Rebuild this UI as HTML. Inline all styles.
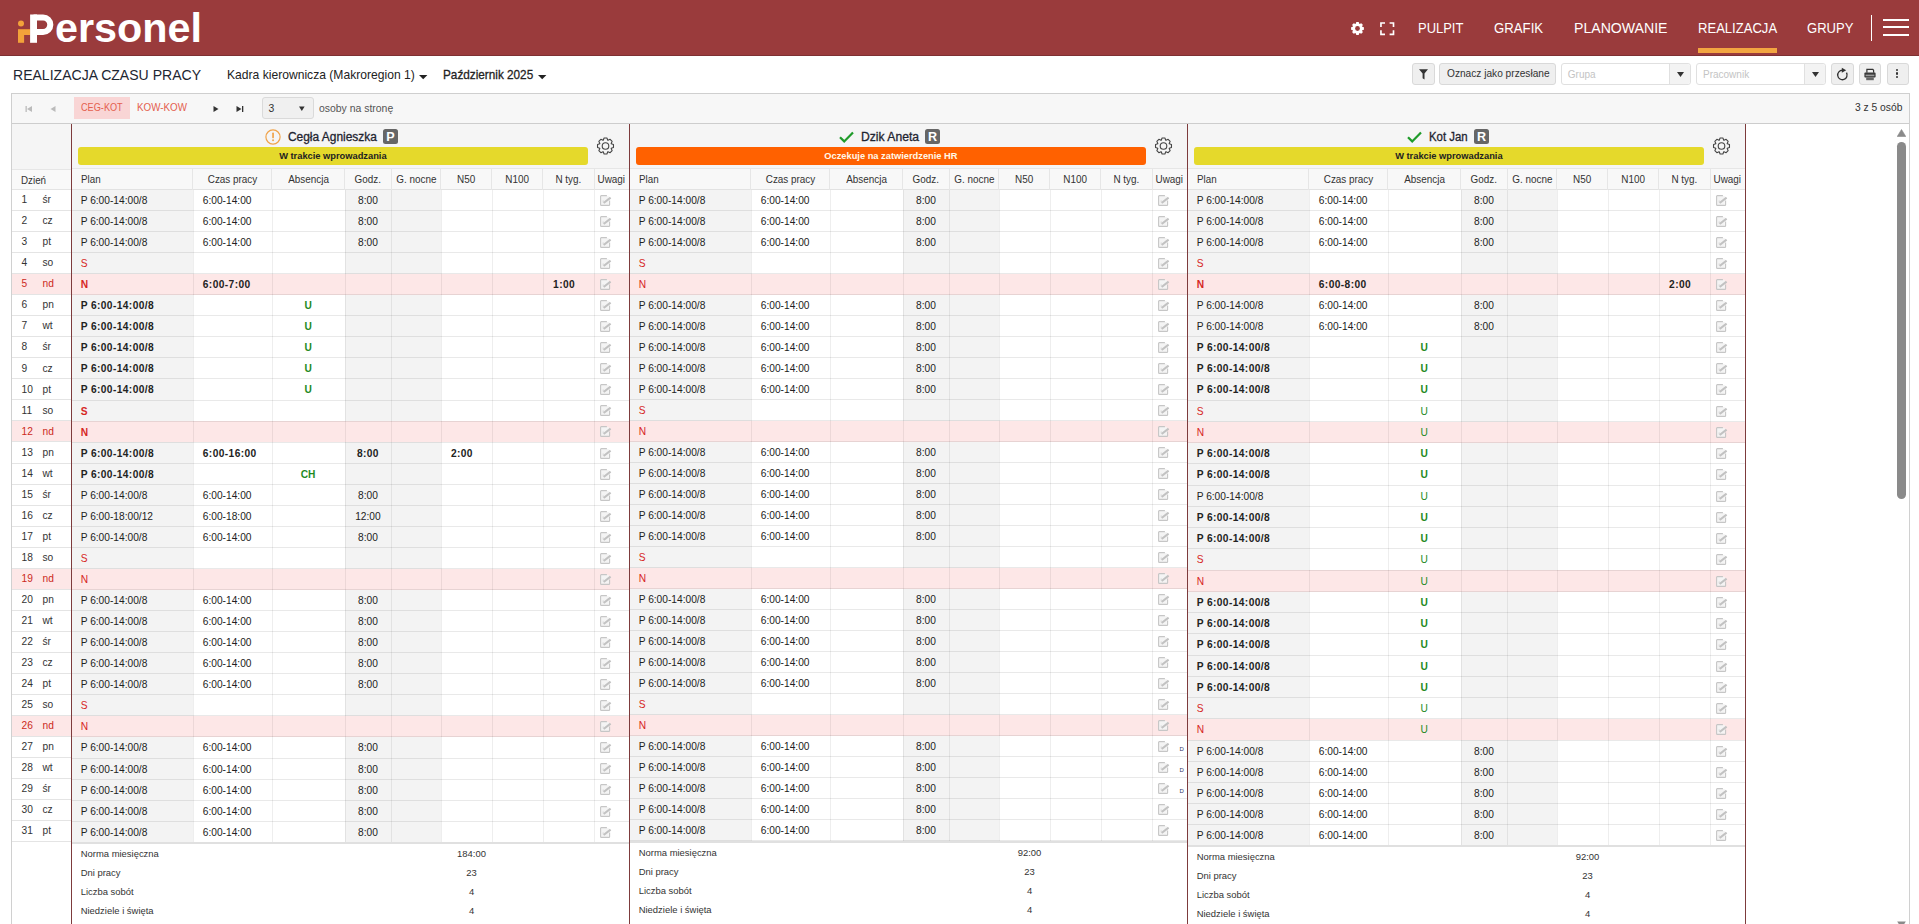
<!DOCTYPE html><html><head><meta charset="utf-8"><title>Realizacja</title><style>
*{box-sizing:border-box}
html,body{margin:0;padding:0}
body{width:1919px;height:924px;overflow:hidden;position:relative;background:#fff;font-family:"Liberation Sans",sans-serif;color:#222}
.ab{position:absolute}
.t{position:absolute;white-space:pre;line-height:1}
.nav{position:absolute;top:20.2px;font-size:15.2px;color:#fff;white-space:pre;line-height:1}
.btn{position:absolute;border:1px solid #d9d9d9;border-radius:3px;background:#efefef}
.cell{position:absolute;white-space:pre;overflow:hidden}
</style></head><body>
<div class="ab" style="left:0;top:0;width:1919px;height:56px;background:#9a3b3c;border-bottom:1px solid #7e3032"></div>
<svg class="ab" style="left:0;top:0" width="60" height="56" viewBox="0 0 60 56"><circle cx="21" cy="23.6" r="3" fill="#f3a23a"/><rect x="18" y="29.2" width="6.1" height="13.6" fill="#f3a23a"/><rect x="24" y="29.2" width="6.2" height="5.8" fill="#f3a23a"/><rect x="30.1" y="14.5" width="6.9" height="28.3" fill="#fff"/><path d="M33.5,17.55 H43.1 A7.2,7.2 0 0 1 43.1,31.95 H33.5" fill="none" stroke="#fff" stroke-width="6.1"/></svg>
<div class="t" style="left:55px;top:8.3px;font-size:40.6px;font-weight:700;color:#fff"><span style="display:inline-block;transform-origin:0 0;transform:scaleX(1.0184)">ersonel</span></div>
<svg class="ab" style="left:1349px;top:20px" width="17" height="17" viewBox="0 0 17 17"><path d="M13.16,6.68 L14.90,7.36 L14.90,9.64 L13.16,10.32 L13.08,10.50 L13.83,12.22 L12.22,13.83 L10.50,13.08 L10.32,13.16 L9.64,14.90 L7.36,14.90 L6.68,13.16 L6.50,13.08 L4.78,13.83 L3.17,12.22 L3.92,10.50 L3.84,10.32 L2.10,9.64 L2.10,7.36 L3.84,6.68 L3.92,6.50 L3.17,4.78 L4.78,3.17 L6.50,3.92 L6.68,3.84 L7.36,2.10 L9.64,2.10 L10.32,3.84 L10.50,3.92 L12.22,3.17 L13.83,4.78 L13.08,6.50 Z" fill="#fff"/><circle cx="8.5" cy="8.5" r="2.4" fill="#9a3b3c"/></svg>
<svg class="ab" style="left:1379.8px;top:21.7px" width="15" height="14" viewBox="0 0 15 14" fill="none" stroke="#fff" stroke-width="1.65"><path d="M0.95,5 V0.95 H5 M9.6,0.95 H13.5 V5 M13.5,8.3 V12.35 H9.6 M5,12.35 H0.95 V8.3"/></svg>
<div class="nav" style="left:1417.5px;width:49.4px"><span style="display:inline-block;transform-origin:0 0;transform:scaleX(0.8538)">PULPIT</span></div>
<div class="nav" style="left:1493.8px;width:53.1px"><span style="display:inline-block;transform-origin:0 0;transform:scaleX(0.8683)">GRAFIK</span></div>
<div class="nav" style="left:1573.5px;width:97.5px"><span style="display:inline-block;transform-origin:0 0;transform:scaleX(0.9283)">PLANOWANIE</span></div>
<div class="nav" style="left:1697.5px;width:83.1px"><span style="display:inline-block;transform-origin:0 0;transform:scaleX(0.8598)">REALIZACJA</span></div>
<div class="nav" style="left:1807.3px;width:50.4px"><span style="display:inline-block;transform-origin:0 0;transform:scaleX(0.8590)">GRUPY</span></div>
<div class="ab" style="left:1697.5px;top:48px;width:79.5px;height:5px;background:#f2a541"></div>
<div class="ab" style="left:1870.5px;top:15px;width:1.5px;height:26px;background:#fff"></div>
<div class="ab" style="left:1883px;top:18.8px;width:26px;height:2.2px;background:#fff"></div>
<div class="ab" style="left:1883px;top:26.3px;width:26px;height:2.2px;background:#fff"></div>
<div class="ab" style="left:1883px;top:33.8px;width:26px;height:2.2px;background:#fff"></div>
<div class="t" style="left:12.8px;top:66.6px;font-size:15.2px;color:#1d2631"><span style="display:inline-block;transform-origin:0 0;transform:scaleX(0.9243)">REALIZACJA CZASU PRACY</span></div>
<div class="t" style="left:226.5px;top:69px;font-size:12.2px;color:#222"><span style="display:inline-block;transform-origin:0 0;transform:scaleX(0.9937)">Kadra kierownicza (Makroregion 1)</span></div>
<svg class="ab" style="left:418.5px;top:74.5px" width="9" height="5" viewBox="0 0 9 5"><path d="M0,0 H8.4 L4.2,4.3 Z" fill="#222"/></svg>
<div class="t" style="left:443.3px;top:69.3px;font-size:12.9px;font-weight:400;-webkit-text-stroke:0.3px #222;color:#222"><span style="display:inline-block;transform-origin:0 0;transform:scaleX(0.9121)">Październik 2025</span></div>
<svg class="ab" style="left:538px;top:74.5px" width="9" height="5" viewBox="0 0 9 5"><path d="M0,0 H8.4 L4.2,4.3 Z" fill="#222"/></svg>
<div class="btn" style="left:1412px;top:62.5px;width:23px;height:22.5px"></div>
<svg class="ab" style="left:1419px;top:69px" width="10" height="11" viewBox="0 0 10 11"><path d="M0,0.3 H9 L5.5,4.6 V10.5 L3.6,9.3 V4.6 Z" fill="#333"/></svg>
<div class="btn" style="left:1439px;top:62.5px;width:117px;height:22.5px"></div>
<div class="t" style="left:1446.7px;top:68.5px;font-size:10.1px;color:#333"><span style="display:inline-block;transform-origin:0 0;transform:scaleX(1.0047)">Oznacz jako przesłane</span></div>
<div class="ab" style="left:1561px;top:62.8px;width:130px;height:22.4px;border:1px solid #e0e0e0;border-radius:3px;background:#fff"></div>
<div class="ab" style="left:1669px;top:63.8px;width:21px;height:20.4px;background:#f3f3f3;border-left:1px solid #e0e0e0;border-radius:0 3px 3px 0"></div>
<div class="t" style="left:1567.8px;top:69.8px;font-size:10px;color:#c4c4c4">Grupa</div>
<svg class="ab" style="left:1676.5px;top:71.5px" width="7" height="6" viewBox="0 0 7 6"><path d="M0,0 H7 L3.5,5 Z" fill="#333"/></svg>
<div class="ab" style="left:1696.2px;top:62.8px;width:129.8px;height:22.4px;border:1px solid #e0e0e0;border-radius:3px;background:#fff"></div>
<div class="ab" style="left:1804.4px;top:63.8px;width:20.59999999999991px;height:20.4px;background:#f3f3f3;border-left:1px solid #e0e0e0;border-radius:0 3px 3px 0"></div>
<div class="t" style="left:1703.0px;top:69.8px;font-size:10px;color:#c4c4c4">Pracownik</div>
<svg class="ab" style="left:1811.7px;top:71.5px" width="7" height="6" viewBox="0 0 7 6"><path d="M0,0 H7 L3.5,5 Z" fill="#333"/></svg>
<div class="btn" style="left:1831.4px;top:62.5px;width:22.3px;height:22.5px"></div>
<div class="btn" style="left:1858.5px;top:62.5px;width:22.3px;height:22.5px"></div>
<div class="btn" style="left:1886.6px;top:62.5px;width:22.3px;height:22.5px"></div>
<svg class="ab" style="left:1836px;top:66px" width="14" height="16" viewBox="0 0 14 16"><path d="M10.5,6.7 A4.7,4.7 0 1 1 6.5,4.3" fill="none" stroke="#333" stroke-width="1.35"/><path d="M5.8,1.8 L10.2,4.3 L5.8,6.8 Z" fill="#333"/></svg>
<svg class="ab" style="left:1863.5px;top:67.5px" width="12" height="13" viewBox="0 0 12 13"><path d="M2.9,4.8 V1.4 H8.8 L9.6,2.3 V4.8" fill="none" stroke="#333" stroke-width="1.2"/><rect x="0.4" y="4.6" width="11.2" height="5" rx="0.8" fill="#3a3a3a"/><rect x="1.6" y="6.6" width="8.8" height="1.6" fill="#999"/><rect x="2.2" y="9.4" width="7.6" height="2.8" fill="#666"/></svg>
<div class="ab" style="left:1895.8px;top:68.6px;width:2.4px;height:2.4px;border-radius:50%;background:#333"></div>
<div class="ab" style="left:1895.8px;top:72.4px;width:2.4px;height:2.4px;border-radius:50%;background:#333"></div>
<div class="ab" style="left:1895.8px;top:76.1px;width:2.4px;height:2.4px;border-radius:50%;background:#333"></div>
<div class="ab" style="left:11px;top:93px;width:1899px;height:31px;background:#f7f7f7;border:1px solid #cfcfcf;border-bottom:1.5px solid #cdcdcd"></div>
<svg class="ab" style="left:25px;top:105px" width="8" height="8" viewBox="0 0 8 8"><rect x="0.5" y="1" width="1.3" height="6" fill="#bbb"/><path d="M7,1 V7 L2,4 Z" fill="#bbb"/></svg>
<svg class="ab" style="left:50px;top:105px" width="6" height="8" viewBox="0 0 6 8"><path d="M5.5,1 V7 L0.5,4 Z" fill="#bbb"/></svg>
<div class="ab" style="left:74.3px;top:97.2px;width:55.4px;height:22.2px;background:#f9d5d5"></div>
<div class="t" style="left:81px;top:102.3px;font-size:11.2px;color:#e4604f"><span style="display:inline-block;transform-origin:0 0;transform:scaleX(0.8181)">CEG-KOT</span></div>
<div class="t" style="left:137.2px;top:102.3px;font-size:11.2px;color:#e4604f"><span style="display:inline-block;transform-origin:0 0;transform:scaleX(0.8757)">KOW-KOW</span></div>
<svg class="ab" style="left:213px;top:105px" width="6" height="8" viewBox="0 0 6 8"><path d="M0.5,1 V7 L5.5,4 Z" fill="#333"/></svg>
<svg class="ab" style="left:235.5px;top:105px" width="8" height="8" viewBox="0 0 8 8"><path d="M0.5,1 V7 L5.5,4 Z" fill="#333"/><rect x="6" y="1" width="1.3" height="6" fill="#333"/></svg>
<div class="ab" style="left:261.5px;top:97.3px;width:52px;height:22px;background:#f0f0f0;border:1px solid #dadada;border-radius:3px"></div>
<div class="t" style="left:268.5px;top:103.8px;font-size:10.4px;color:#333">3</div>
<svg class="ab" style="left:299.3px;top:105.5px" width="6" height="6" viewBox="0 0 6 6"><path d="M0,0.5 H5.6 L2.8,5 Z" fill="#333"/></svg>
<div class="t" style="left:319.2px;top:103.8px;font-size:10.4px;color:#555"><span style="display:inline-block;transform-origin:0 0;transform:scaleX(1.0036)">osoby na stronę</span></div>
<div class="t" style="left:1855.2px;top:103px;font-size:10.3px;color:#333"><span style="display:inline-block;transform-origin:0 0;transform:scaleX(0.9976)">3 z 5 osób</span></div>
<div class="ab" style="left:11px;top:123px;width:1px;height:801px;background:#d0d0d0"></div>
<div class="ab" style="left:1909px;top:123px;width:1px;height:801px;background:#d0d0d0"></div>
<div class="ab" style="left:12px;top:124px;width:59px;height:66px;background:#f5f5f5"></div>
<div class="ab" style="left:12px;top:168.5px;width:59px;height:21.5px;background:#f9f9f9;border-top:1px solid #e6e6e6"></div>
<div class="t" style="left:20.7px;top:174.6px;font-size:11px;color:#333"><span style="display:inline-block;transform:scaleX(0.89);transform-origin:0 0">Dzień</span></div>
<div class="ab" style="left:12px;top:189px;width:59px;height:1px;background:#e4e4e4"></div>
<div class="ab" style="left:12px;top:190.00px;width:59px;height:21.04px;background:#fff;border-bottom:1px solid #e4e4e4"></div>
<div class="t" style="left:21.5px;top:195.20px;font-size:10.2px;color:#333;font-weight:400">1</div>
<div class="t" style="left:42.5px;top:195.20px;font-size:10.2px;color:#333;font-weight:400">śr</div>
<div class="ab" style="left:12px;top:211.04px;width:59px;height:21.04px;background:#fff;border-bottom:1px solid #e4e4e4"></div>
<div class="t" style="left:21.5px;top:216.24px;font-size:10.2px;color:#333;font-weight:400">2</div>
<div class="t" style="left:42.5px;top:216.24px;font-size:10.2px;color:#333;font-weight:400">cz</div>
<div class="ab" style="left:12px;top:232.08px;width:59px;height:21.04px;background:#fff;border-bottom:1px solid #e4e4e4"></div>
<div class="t" style="left:21.5px;top:237.28px;font-size:10.2px;color:#333;font-weight:400">3</div>
<div class="t" style="left:42.5px;top:237.28px;font-size:10.2px;color:#333;font-weight:400">pt</div>
<div class="ab" style="left:12px;top:253.12px;width:59px;height:21.04px;background:#fff;border-bottom:1px solid #e4e4e4"></div>
<div class="t" style="left:21.5px;top:258.32px;font-size:10.2px;color:#333;font-weight:400">4</div>
<div class="t" style="left:42.5px;top:258.32px;font-size:10.2px;color:#333;font-weight:400">so</div>
<div class="ab" style="left:12px;top:274.16px;width:59px;height:21.04px;background:#fde7e7;border-bottom:1px solid #e4e4e4"></div>
<div class="t" style="left:21.5px;top:279.36px;font-size:10.2px;color:#cc2a22;font-weight:400">5</div>
<div class="t" style="left:42.5px;top:279.36px;font-size:10.2px;color:#cc2a22;font-weight:400">nd</div>
<div class="ab" style="left:12px;top:295.20px;width:59px;height:21.04px;background:#fff;border-bottom:1px solid #e4e4e4"></div>
<div class="t" style="left:21.5px;top:300.40px;font-size:10.2px;color:#333;font-weight:400">6</div>
<div class="t" style="left:42.5px;top:300.40px;font-size:10.2px;color:#333;font-weight:400">pn</div>
<div class="ab" style="left:12px;top:316.24px;width:59px;height:21.04px;background:#fff;border-bottom:1px solid #e4e4e4"></div>
<div class="t" style="left:21.5px;top:321.44px;font-size:10.2px;color:#333;font-weight:400">7</div>
<div class="t" style="left:42.5px;top:321.44px;font-size:10.2px;color:#333;font-weight:400">wt</div>
<div class="ab" style="left:12px;top:337.28px;width:59px;height:21.04px;background:#fff;border-bottom:1px solid #e4e4e4"></div>
<div class="t" style="left:21.5px;top:342.48px;font-size:10.2px;color:#333;font-weight:400">8</div>
<div class="t" style="left:42.5px;top:342.48px;font-size:10.2px;color:#333;font-weight:400">śr</div>
<div class="ab" style="left:12px;top:358.32px;width:59px;height:21.04px;background:#fff;border-bottom:1px solid #e4e4e4"></div>
<div class="t" style="left:21.5px;top:363.52px;font-size:10.2px;color:#333;font-weight:400">9</div>
<div class="t" style="left:42.5px;top:363.52px;font-size:10.2px;color:#333;font-weight:400">cz</div>
<div class="ab" style="left:12px;top:379.36px;width:59px;height:21.04px;background:#fff;border-bottom:1px solid #e4e4e4"></div>
<div class="t" style="left:21.5px;top:384.56px;font-size:10.2px;color:#333;font-weight:400">10</div>
<div class="t" style="left:42.5px;top:384.56px;font-size:10.2px;color:#333;font-weight:400">pt</div>
<div class="ab" style="left:12px;top:400.40px;width:59px;height:21.04px;background:#fff;border-bottom:1px solid #e4e4e4"></div>
<div class="t" style="left:21.5px;top:405.60px;font-size:10.2px;color:#333;font-weight:400">11</div>
<div class="t" style="left:42.5px;top:405.60px;font-size:10.2px;color:#333;font-weight:400">so</div>
<div class="ab" style="left:12px;top:421.44px;width:59px;height:21.04px;background:#fde7e7;border-bottom:1px solid #e4e4e4"></div>
<div class="t" style="left:21.5px;top:426.64px;font-size:10.2px;color:#cc2a22;font-weight:400">12</div>
<div class="t" style="left:42.5px;top:426.64px;font-size:10.2px;color:#cc2a22;font-weight:400">nd</div>
<div class="ab" style="left:12px;top:442.48px;width:59px;height:21.04px;background:#fff;border-bottom:1px solid #e4e4e4"></div>
<div class="t" style="left:21.5px;top:447.68px;font-size:10.2px;color:#333;font-weight:400">13</div>
<div class="t" style="left:42.5px;top:447.68px;font-size:10.2px;color:#333;font-weight:400">pn</div>
<div class="ab" style="left:12px;top:463.52px;width:59px;height:21.04px;background:#fff;border-bottom:1px solid #e4e4e4"></div>
<div class="t" style="left:21.5px;top:468.72px;font-size:10.2px;color:#333;font-weight:400">14</div>
<div class="t" style="left:42.5px;top:468.72px;font-size:10.2px;color:#333;font-weight:400">wt</div>
<div class="ab" style="left:12px;top:484.56px;width:59px;height:21.04px;background:#fff;border-bottom:1px solid #e4e4e4"></div>
<div class="t" style="left:21.5px;top:489.76px;font-size:10.2px;color:#333;font-weight:400">15</div>
<div class="t" style="left:42.5px;top:489.76px;font-size:10.2px;color:#333;font-weight:400">śr</div>
<div class="ab" style="left:12px;top:505.60px;width:59px;height:21.04px;background:#fff;border-bottom:1px solid #e4e4e4"></div>
<div class="t" style="left:21.5px;top:510.80px;font-size:10.2px;color:#333;font-weight:400">16</div>
<div class="t" style="left:42.5px;top:510.80px;font-size:10.2px;color:#333;font-weight:400">cz</div>
<div class="ab" style="left:12px;top:526.64px;width:59px;height:21.04px;background:#fff;border-bottom:1px solid #e4e4e4"></div>
<div class="t" style="left:21.5px;top:531.84px;font-size:10.2px;color:#333;font-weight:400">17</div>
<div class="t" style="left:42.5px;top:531.84px;font-size:10.2px;color:#333;font-weight:400">pt</div>
<div class="ab" style="left:12px;top:547.68px;width:59px;height:21.04px;background:#fff;border-bottom:1px solid #e4e4e4"></div>
<div class="t" style="left:21.5px;top:552.88px;font-size:10.2px;color:#333;font-weight:400">18</div>
<div class="t" style="left:42.5px;top:552.88px;font-size:10.2px;color:#333;font-weight:400">so</div>
<div class="ab" style="left:12px;top:568.72px;width:59px;height:21.04px;background:#fde7e7;border-bottom:1px solid #e4e4e4"></div>
<div class="t" style="left:21.5px;top:573.92px;font-size:10.2px;color:#cc2a22;font-weight:400">19</div>
<div class="t" style="left:42.5px;top:573.92px;font-size:10.2px;color:#cc2a22;font-weight:400">nd</div>
<div class="ab" style="left:12px;top:589.76px;width:59px;height:21.04px;background:#fff;border-bottom:1px solid #e4e4e4"></div>
<div class="t" style="left:21.5px;top:594.96px;font-size:10.2px;color:#333;font-weight:400">20</div>
<div class="t" style="left:42.5px;top:594.96px;font-size:10.2px;color:#333;font-weight:400">pn</div>
<div class="ab" style="left:12px;top:610.80px;width:59px;height:21.04px;background:#fff;border-bottom:1px solid #e4e4e4"></div>
<div class="t" style="left:21.5px;top:616.00px;font-size:10.2px;color:#333;font-weight:400">21</div>
<div class="t" style="left:42.5px;top:616.00px;font-size:10.2px;color:#333;font-weight:400">wt</div>
<div class="ab" style="left:12px;top:631.84px;width:59px;height:21.04px;background:#fff;border-bottom:1px solid #e4e4e4"></div>
<div class="t" style="left:21.5px;top:637.04px;font-size:10.2px;color:#333;font-weight:400">22</div>
<div class="t" style="left:42.5px;top:637.04px;font-size:10.2px;color:#333;font-weight:400">śr</div>
<div class="ab" style="left:12px;top:652.88px;width:59px;height:21.04px;background:#fff;border-bottom:1px solid #e4e4e4"></div>
<div class="t" style="left:21.5px;top:658.08px;font-size:10.2px;color:#333;font-weight:400">23</div>
<div class="t" style="left:42.5px;top:658.08px;font-size:10.2px;color:#333;font-weight:400">cz</div>
<div class="ab" style="left:12px;top:673.92px;width:59px;height:21.04px;background:#fff;border-bottom:1px solid #e4e4e4"></div>
<div class="t" style="left:21.5px;top:679.12px;font-size:10.2px;color:#333;font-weight:400">24</div>
<div class="t" style="left:42.5px;top:679.12px;font-size:10.2px;color:#333;font-weight:400">pt</div>
<div class="ab" style="left:12px;top:694.96px;width:59px;height:21.04px;background:#fff;border-bottom:1px solid #e4e4e4"></div>
<div class="t" style="left:21.5px;top:700.16px;font-size:10.2px;color:#333;font-weight:400">25</div>
<div class="t" style="left:42.5px;top:700.16px;font-size:10.2px;color:#333;font-weight:400">so</div>
<div class="ab" style="left:12px;top:716.00px;width:59px;height:21.04px;background:#fde7e7;border-bottom:1px solid #e4e4e4"></div>
<div class="t" style="left:21.5px;top:721.20px;font-size:10.2px;color:#cc2a22;font-weight:400">26</div>
<div class="t" style="left:42.5px;top:721.20px;font-size:10.2px;color:#cc2a22;font-weight:400">nd</div>
<div class="ab" style="left:12px;top:737.04px;width:59px;height:21.04px;background:#fff;border-bottom:1px solid #e4e4e4"></div>
<div class="t" style="left:21.5px;top:742.24px;font-size:10.2px;color:#333;font-weight:400">27</div>
<div class="t" style="left:42.5px;top:742.24px;font-size:10.2px;color:#333;font-weight:400">pn</div>
<div class="ab" style="left:12px;top:758.08px;width:59px;height:21.04px;background:#fff;border-bottom:1px solid #e4e4e4"></div>
<div class="t" style="left:21.5px;top:763.28px;font-size:10.2px;color:#333;font-weight:400">28</div>
<div class="t" style="left:42.5px;top:763.28px;font-size:10.2px;color:#333;font-weight:400">wt</div>
<div class="ab" style="left:12px;top:779.12px;width:59px;height:21.04px;background:#fff;border-bottom:1px solid #e4e4e4"></div>
<div class="t" style="left:21.5px;top:784.32px;font-size:10.2px;color:#333;font-weight:400">29</div>
<div class="t" style="left:42.5px;top:784.32px;font-size:10.2px;color:#333;font-weight:400">śr</div>
<div class="ab" style="left:12px;top:800.16px;width:59px;height:21.04px;background:#fff;border-bottom:1px solid #e4e4e4"></div>
<div class="t" style="left:21.5px;top:805.36px;font-size:10.2px;color:#333;font-weight:400">30</div>
<div class="t" style="left:42.5px;top:805.36px;font-size:10.2px;color:#333;font-weight:400">cz</div>
<div class="ab" style="left:12px;top:821.20px;width:59px;height:21.04px;background:#fff;border-bottom:1px solid #e4e4e4"></div>
<div class="t" style="left:21.5px;top:826.40px;font-size:10.2px;color:#333;font-weight:400">31</div>
<div class="t" style="left:42.5px;top:826.40px;font-size:10.2px;color:#333;font-weight:400">pt</div>
<div class="ab" style="left:71px;top:123.5px;width:1.1px;height:801px;background:#7d3b3c"></div>
<div class="ab" style="left:629px;top:123.5px;width:1.1px;height:801px;background:#7d3b3c"></div>
<div class="ab" style="left:1187px;top:123.5px;width:1.1px;height:801px;background:#7d3b3c"></div>
<div class="ab" style="left:1745px;top:123.5px;width:1.1px;height:801px;background:#7d3b3c"></div>
<div class="ab" style="left:72px;top:124px;width:557px;height:45px;background:#f5f5f5"></div>
<div class="ab" style="left:77.8px;top:147px;width:510.2px;height:18px;border-radius:3px;background:#e5d92b"></div>
<div class="t" style="left:77.8px;top:151.5px;width:510.2px;text-align:center;font-size:9.3px;font-weight:700;color:#222">W trakcie wprowadzania</div>
<svg class="ab" style="left:596px;top:137px" width="19" height="18" viewBox="0 0 19 18"><path d="M15.27,6.74 L17.47,7.58 L17.47,10.42 L15.27,11.26 L15.18,11.48 L16.15,13.63 L14.13,15.65 L11.98,14.68 L11.76,14.77 L10.92,16.97 L8.08,16.97 L7.24,14.77 L7.02,14.68 L4.87,15.65 L2.85,13.63 L3.82,11.48 L3.73,11.26 L1.53,10.42 L1.53,7.58 L3.73,6.74 L3.82,6.52 L2.85,4.37 L4.87,2.35 L7.02,3.32 L7.24,3.23 L8.08,1.03 L10.92,1.03 L11.76,3.23 L11.98,3.32 L14.13,2.35 L16.15,4.37 L15.18,6.52 Z" fill="none" stroke="#444" stroke-width="1.1" stroke-linejoin="round"/><circle cx="9.5" cy="9" r="3.3" fill="none" stroke="#444" stroke-width="1.1"/></svg>
<svg class="ab" style="left:265px;top:129px" width="16" height="16" viewBox="0 0 16 16"><circle cx="8" cy="8" r="7.1" fill="none" stroke="#f0a34a" stroke-width="1.2"/><rect x="7.2" y="3.6" width="1.7" height="5.6" rx="0.6" fill="#f0a34a"/><circle cx="8.05" cy="11.3" r="0.95" fill="#f0a34a"/></svg>
<div class="t" style="left:287.5px;top:130.7px;font-size:12.3px;font-weight:400;-webkit-text-stroke:0.3px #1e2430;color:#1e2430"><span style="display:inline-block;transform-origin:0 0;transform:scaleX(0.9693)">Cegła Agnieszka</span></div>
<div class="ab" style="left:383px;top:129.2px;width:15px;height:14.8px;border-radius:2.5px;background:#666"></div><div class="t" style="left:383px;top:130.6px;width:15px;text-align:center;font-size:12.6px;font-weight:700;color:#fff">P</div>
<div class="ab" style="left:72px;top:167.8px;width:557px;height:22.7px;background:#f8f8f8;border-top:1px solid #e6e6e6;border-bottom:1px solid #e2e2e2"></div>
<div class="t" style="left:80.70px;top:173.6px;font-size:11px;color:#333"><span style="display:inline-block;transform:scaleX(0.89);transform-origin:0 0">Plan</span></div>
<div class="ab" style="left:192.00px;top:169px;width:1px;height:21px;background:#e6e6e6"></div>
<div class="t" style="left:192.50px;top:173.6px;width:79.20px;text-align:center;font-size:11px;color:#333"><span style="display:inline-block;transform:scaleX(0.9);transform-origin:50% 0">Czas pracy</span></div>
<div class="ab" style="left:271.20px;top:169px;width:1px;height:21px;background:#e6e6e6"></div>
<div class="t" style="left:271.70px;top:173.6px;width:72.90px;text-align:center;font-size:11px;color:#333"><span style="display:inline-block;transform:scaleX(0.9);transform-origin:50% 0">Absencja</span></div>
<div class="ab" style="left:344.10px;top:169px;width:1px;height:21px;background:#e6e6e6"></div>
<div class="t" style="left:344.60px;top:173.6px;width:46.60px;text-align:center;font-size:11px;color:#333"><span style="display:inline-block;transform:scaleX(0.9);transform-origin:50% 0">Godz.</span></div>
<div class="ab" style="left:390.70px;top:169px;width:1px;height:21px;background:#e6e6e6"></div>
<div class="t" style="left:391.20px;top:173.6px;width:49.40px;text-align:center;font-size:11px;color:#333"><span style="display:inline-block;transform:scaleX(0.9);transform-origin:50% 0">G. nocne</span></div>
<div class="ab" style="left:440.10px;top:169px;width:1px;height:21px;background:#e6e6e6"></div>
<div class="t" style="left:440.60px;top:173.6px;width:50.90px;text-align:center;font-size:11px;color:#333"><span style="display:inline-block;transform:scaleX(0.9);transform-origin:50% 0">N50</span></div>
<div class="ab" style="left:491.00px;top:169px;width:1px;height:21px;background:#e6e6e6"></div>
<div class="t" style="left:491.50px;top:173.6px;width:51.30px;text-align:center;font-size:11px;color:#333"><span style="display:inline-block;transform:scaleX(0.9);transform-origin:50% 0">N100</span></div>
<div class="ab" style="left:542.30px;top:169px;width:1px;height:21px;background:#e6e6e6"></div>
<div class="t" style="left:542.80px;top:173.6px;width:51.50px;text-align:center;font-size:11px;color:#333"><span style="display:inline-block;transform:scaleX(0.9);transform-origin:50% 0">N tyg.</span></div>
<div class="ab" style="left:593.80px;top:169px;width:1px;height:21px;background:#e6e6e6"></div>
<div class="t" style="left:594.30px;top:173.6px;width:34.70px;text-align:center;font-size:11px;color:#333"><span style="display:inline-block;transform:scaleX(0.9);transform-origin:50% 0">Uwagi</span></div>
<div class="ab" style="left:72px;top:190px;width:557px;height:652.86px;background:#fff"></div>
<div class="ab" style="left:72.00px;top:190px;width:120.50px;height:652.86px;background:#f3f3f3"></div>
<div class="ab" style="left:344.60px;top:190px;width:46.60px;height:652.86px;background:#f3f3f3"></div>
<div class="ab" style="left:391.20px;top:190px;width:49.40px;height:652.86px;background:#f3f3f3"></div>
<div class="ab" style="left:72px;top:273.74px;width:557px;height:21.06px;background:#fde7e7"></div>
<div class="ab" style="left:72px;top:421.16px;width:557px;height:21.06px;background:#fde7e7"></div>
<div class="ab" style="left:72px;top:568.58px;width:557px;height:21.06px;background:#fde7e7"></div>
<div class="ab" style="left:72px;top:716.00px;width:557px;height:21.06px;background:#fde7e7"></div>
<div class="ab" style="left:72px;top:209.96px;width:557px;height:1px;background:rgba(0,0,0,0.085)"></div>
<div class="ab" style="left:72px;top:231.02px;width:557px;height:1px;background:rgba(0,0,0,0.085)"></div>
<div class="ab" style="left:72px;top:252.08px;width:557px;height:1px;background:rgba(0,0,0,0.085)"></div>
<div class="ab" style="left:72px;top:273.14px;width:557px;height:1px;background:rgba(0,0,0,0.085)"></div>
<div class="ab" style="left:72px;top:294.20px;width:557px;height:1px;background:rgba(0,0,0,0.085)"></div>
<div class="ab" style="left:72px;top:315.26px;width:557px;height:1px;background:rgba(0,0,0,0.085)"></div>
<div class="ab" style="left:72px;top:336.32px;width:557px;height:1px;background:rgba(0,0,0,0.085)"></div>
<div class="ab" style="left:72px;top:357.38px;width:557px;height:1px;background:rgba(0,0,0,0.085)"></div>
<div class="ab" style="left:72px;top:378.44px;width:557px;height:1px;background:rgba(0,0,0,0.085)"></div>
<div class="ab" style="left:72px;top:399.50px;width:557px;height:1px;background:rgba(0,0,0,0.085)"></div>
<div class="ab" style="left:72px;top:420.56px;width:557px;height:1px;background:rgba(0,0,0,0.085)"></div>
<div class="ab" style="left:72px;top:441.62px;width:557px;height:1px;background:rgba(0,0,0,0.085)"></div>
<div class="ab" style="left:72px;top:462.68px;width:557px;height:1px;background:rgba(0,0,0,0.085)"></div>
<div class="ab" style="left:72px;top:483.74px;width:557px;height:1px;background:rgba(0,0,0,0.085)"></div>
<div class="ab" style="left:72px;top:504.80px;width:557px;height:1px;background:rgba(0,0,0,0.085)"></div>
<div class="ab" style="left:72px;top:525.86px;width:557px;height:1px;background:rgba(0,0,0,0.085)"></div>
<div class="ab" style="left:72px;top:546.92px;width:557px;height:1px;background:rgba(0,0,0,0.085)"></div>
<div class="ab" style="left:72px;top:567.98px;width:557px;height:1px;background:rgba(0,0,0,0.085)"></div>
<div class="ab" style="left:72px;top:589.04px;width:557px;height:1px;background:rgba(0,0,0,0.085)"></div>
<div class="ab" style="left:72px;top:610.10px;width:557px;height:1px;background:rgba(0,0,0,0.085)"></div>
<div class="ab" style="left:72px;top:631.16px;width:557px;height:1px;background:rgba(0,0,0,0.085)"></div>
<div class="ab" style="left:72px;top:652.22px;width:557px;height:1px;background:rgba(0,0,0,0.085)"></div>
<div class="ab" style="left:72px;top:673.28px;width:557px;height:1px;background:rgba(0,0,0,0.085)"></div>
<div class="ab" style="left:72px;top:694.34px;width:557px;height:1px;background:rgba(0,0,0,0.085)"></div>
<div class="ab" style="left:72px;top:715.40px;width:557px;height:1px;background:rgba(0,0,0,0.085)"></div>
<div class="ab" style="left:72px;top:736.46px;width:557px;height:1px;background:rgba(0,0,0,0.085)"></div>
<div class="ab" style="left:72px;top:757.52px;width:557px;height:1px;background:rgba(0,0,0,0.085)"></div>
<div class="ab" style="left:72px;top:778.58px;width:557px;height:1px;background:rgba(0,0,0,0.085)"></div>
<div class="ab" style="left:72px;top:799.64px;width:557px;height:1px;background:rgba(0,0,0,0.085)"></div>
<div class="ab" style="left:72px;top:820.70px;width:557px;height:1px;background:rgba(0,0,0,0.085)"></div>
<div class="ab" style="left:72px;top:841.76px;width:557px;height:1px;background:rgba(0,0,0,0.085)"></div>
<div class="ab" style="left:192.50px;top:190px;width:1px;height:652.86px;background:rgba(0,0,0,0.068)"></div>
<div class="ab" style="left:271.70px;top:190px;width:1px;height:652.86px;background:rgba(0,0,0,0.068)"></div>
<div class="ab" style="left:344.60px;top:190px;width:1px;height:652.86px;background:rgba(0,0,0,0.068)"></div>
<div class="ab" style="left:391.20px;top:190px;width:1px;height:652.86px;background:rgba(0,0,0,0.068)"></div>
<div class="ab" style="left:440.60px;top:190px;width:1px;height:652.86px;background:rgba(0,0,0,0.068)"></div>
<div class="ab" style="left:491.50px;top:190px;width:1px;height:652.86px;background:rgba(0,0,0,0.068)"></div>
<div class="ab" style="left:542.80px;top:190px;width:1px;height:652.86px;background:rgba(0,0,0,0.068)"></div>
<div class="ab" style="left:594.30px;top:190px;width:1px;height:652.86px;background:rgba(0,0,0,0.068)"></div>
<div class="t" style="left:80.70px;top:195.90px;font-size:10.2px;font-weight:400;color:#222">P 6:00-14:00/8</div>
<div class="t" style="left:202.80px;top:195.90px;font-size:10.2px;font-weight:400;color:#222">6:00-14:00</div>
<div class="t" style="left:344.60px;top:195.90px;width:46.60px;text-align:center;font-size:10.2px;font-weight:400;color:#222">8:00</div>
<svg class="ab" style="left:599.80px;top:194.80px" width="12" height="11" viewBox="0 0 12 11"><rect x="1" y="1" width="7.8" height="8.8" fill="#f4f4f4"/><path d="M6.9,0.6 H1.3 Q0.6,0.6 0.6,1.3 V9.7 Q0.6,10.4 1.3,10.4 H8.9 Q9.6,10.4 9.6,9.7 V5.6" fill="none" stroke="#c6c6c6" stroke-width="1.1"/><path d="M3.6,8 L10.6,2.6" stroke="#c2c2c2" stroke-width="2.1"/><path d="M3.2,5.4 V7.6" stroke="#d6d6d6" stroke-width="1"/></svg>
<div class="t" style="left:80.70px;top:216.96px;font-size:10.2px;font-weight:400;color:#222">P 6:00-14:00/8</div>
<div class="t" style="left:202.80px;top:216.96px;font-size:10.2px;font-weight:400;color:#222">6:00-14:00</div>
<div class="t" style="left:344.60px;top:216.96px;width:46.60px;text-align:center;font-size:10.2px;font-weight:400;color:#222">8:00</div>
<svg class="ab" style="left:599.80px;top:215.86px" width="12" height="11" viewBox="0 0 12 11"><rect x="1" y="1" width="7.8" height="8.8" fill="#f4f4f4"/><path d="M6.9,0.6 H1.3 Q0.6,0.6 0.6,1.3 V9.7 Q0.6,10.4 1.3,10.4 H8.9 Q9.6,10.4 9.6,9.7 V5.6" fill="none" stroke="#c6c6c6" stroke-width="1.1"/><path d="M3.6,8 L10.6,2.6" stroke="#c2c2c2" stroke-width="2.1"/><path d="M3.2,5.4 V7.6" stroke="#d6d6d6" stroke-width="1"/></svg>
<div class="t" style="left:80.70px;top:238.02px;font-size:10.2px;font-weight:400;color:#222">P 6:00-14:00/8</div>
<div class="t" style="left:202.80px;top:238.02px;font-size:10.2px;font-weight:400;color:#222">6:00-14:00</div>
<div class="t" style="left:344.60px;top:238.02px;width:46.60px;text-align:center;font-size:10.2px;font-weight:400;color:#222">8:00</div>
<svg class="ab" style="left:599.80px;top:236.92px" width="12" height="11" viewBox="0 0 12 11"><rect x="1" y="1" width="7.8" height="8.8" fill="#f4f4f4"/><path d="M6.9,0.6 H1.3 Q0.6,0.6 0.6,1.3 V9.7 Q0.6,10.4 1.3,10.4 H8.9 Q9.6,10.4 9.6,9.7 V5.6" fill="none" stroke="#c6c6c6" stroke-width="1.1"/><path d="M3.6,8 L10.6,2.6" stroke="#c2c2c2" stroke-width="2.1"/><path d="M3.2,5.4 V7.6" stroke="#d6d6d6" stroke-width="1"/></svg>
<div class="t" style="left:80.70px;top:259.08px;font-size:10.2px;font-weight:400;color:#d6261f">S</div>
<svg class="ab" style="left:599.80px;top:257.98px" width="12" height="11" viewBox="0 0 12 11"><rect x="1" y="1" width="7.8" height="8.8" fill="#f4f4f4"/><path d="M6.9,0.6 H1.3 Q0.6,0.6 0.6,1.3 V9.7 Q0.6,10.4 1.3,10.4 H8.9 Q9.6,10.4 9.6,9.7 V5.6" fill="none" stroke="#c6c6c6" stroke-width="1.1"/><path d="M3.6,8 L10.6,2.6" stroke="#c2c2c2" stroke-width="2.1"/><path d="M3.2,5.4 V7.6" stroke="#d6d6d6" stroke-width="1"/></svg>
<div class="t" style="left:80.70px;top:280.14px;font-size:10.2px;font-weight:700;color:#d6261f">N</div>
<div class="t" style="left:202.80px;top:280.14px;font-size:10.2px;font-weight:700;color:#222;letter-spacing:0.4px">6:00-7:00</div>
<div class="t" style="left:553.10px;top:280.14px;font-size:10.2px;font-weight:700;color:#222;letter-spacing:0.4px">1:00</div>
<svg class="ab" style="left:599.80px;top:279.04px" width="12" height="11" viewBox="0 0 12 11"><rect x="1" y="1" width="7.8" height="8.8" fill="#f4f4f4"/><path d="M6.9,0.6 H1.3 Q0.6,0.6 0.6,1.3 V9.7 Q0.6,10.4 1.3,10.4 H8.9 Q9.6,10.4 9.6,9.7 V5.6" fill="none" stroke="#c6c6c6" stroke-width="1.1"/><path d="M3.6,8 L10.6,2.6" stroke="#c2c2c2" stroke-width="2.1"/><path d="M3.2,5.4 V7.6" stroke="#d6d6d6" stroke-width="1"/></svg>
<div class="t" style="left:80.70px;top:301.20px;font-size:10.2px;font-weight:700;color:#222;letter-spacing:0.4px">P 6:00-14:00/8</div>
<div class="t" style="left:271.70px;top:301.20px;width:72.90px;text-align:center;font-size:10.2px;font-weight:700;color:#1e8a1e">U</div>
<svg class="ab" style="left:599.80px;top:300.10px" width="12" height="11" viewBox="0 0 12 11"><rect x="1" y="1" width="7.8" height="8.8" fill="#f4f4f4"/><path d="M6.9,0.6 H1.3 Q0.6,0.6 0.6,1.3 V9.7 Q0.6,10.4 1.3,10.4 H8.9 Q9.6,10.4 9.6,9.7 V5.6" fill="none" stroke="#c6c6c6" stroke-width="1.1"/><path d="M3.6,8 L10.6,2.6" stroke="#c2c2c2" stroke-width="2.1"/><path d="M3.2,5.4 V7.6" stroke="#d6d6d6" stroke-width="1"/></svg>
<div class="t" style="left:80.70px;top:322.26px;font-size:10.2px;font-weight:700;color:#222;letter-spacing:0.4px">P 6:00-14:00/8</div>
<div class="t" style="left:271.70px;top:322.26px;width:72.90px;text-align:center;font-size:10.2px;font-weight:700;color:#1e8a1e">U</div>
<svg class="ab" style="left:599.80px;top:321.16px" width="12" height="11" viewBox="0 0 12 11"><rect x="1" y="1" width="7.8" height="8.8" fill="#f4f4f4"/><path d="M6.9,0.6 H1.3 Q0.6,0.6 0.6,1.3 V9.7 Q0.6,10.4 1.3,10.4 H8.9 Q9.6,10.4 9.6,9.7 V5.6" fill="none" stroke="#c6c6c6" stroke-width="1.1"/><path d="M3.6,8 L10.6,2.6" stroke="#c2c2c2" stroke-width="2.1"/><path d="M3.2,5.4 V7.6" stroke="#d6d6d6" stroke-width="1"/></svg>
<div class="t" style="left:80.70px;top:343.32px;font-size:10.2px;font-weight:700;color:#222;letter-spacing:0.4px">P 6:00-14:00/8</div>
<div class="t" style="left:271.70px;top:343.32px;width:72.90px;text-align:center;font-size:10.2px;font-weight:700;color:#1e8a1e">U</div>
<svg class="ab" style="left:599.80px;top:342.22px" width="12" height="11" viewBox="0 0 12 11"><rect x="1" y="1" width="7.8" height="8.8" fill="#f4f4f4"/><path d="M6.9,0.6 H1.3 Q0.6,0.6 0.6,1.3 V9.7 Q0.6,10.4 1.3,10.4 H8.9 Q9.6,10.4 9.6,9.7 V5.6" fill="none" stroke="#c6c6c6" stroke-width="1.1"/><path d="M3.6,8 L10.6,2.6" stroke="#c2c2c2" stroke-width="2.1"/><path d="M3.2,5.4 V7.6" stroke="#d6d6d6" stroke-width="1"/></svg>
<div class="t" style="left:80.70px;top:364.38px;font-size:10.2px;font-weight:700;color:#222;letter-spacing:0.4px">P 6:00-14:00/8</div>
<div class="t" style="left:271.70px;top:364.38px;width:72.90px;text-align:center;font-size:10.2px;font-weight:700;color:#1e8a1e">U</div>
<svg class="ab" style="left:599.80px;top:363.28px" width="12" height="11" viewBox="0 0 12 11"><rect x="1" y="1" width="7.8" height="8.8" fill="#f4f4f4"/><path d="M6.9,0.6 H1.3 Q0.6,0.6 0.6,1.3 V9.7 Q0.6,10.4 1.3,10.4 H8.9 Q9.6,10.4 9.6,9.7 V5.6" fill="none" stroke="#c6c6c6" stroke-width="1.1"/><path d="M3.6,8 L10.6,2.6" stroke="#c2c2c2" stroke-width="2.1"/><path d="M3.2,5.4 V7.6" stroke="#d6d6d6" stroke-width="1"/></svg>
<div class="t" style="left:80.70px;top:385.44px;font-size:10.2px;font-weight:700;color:#222;letter-spacing:0.4px">P 6:00-14:00/8</div>
<div class="t" style="left:271.70px;top:385.44px;width:72.90px;text-align:center;font-size:10.2px;font-weight:700;color:#1e8a1e">U</div>
<svg class="ab" style="left:599.80px;top:384.34px" width="12" height="11" viewBox="0 0 12 11"><rect x="1" y="1" width="7.8" height="8.8" fill="#f4f4f4"/><path d="M6.9,0.6 H1.3 Q0.6,0.6 0.6,1.3 V9.7 Q0.6,10.4 1.3,10.4 H8.9 Q9.6,10.4 9.6,9.7 V5.6" fill="none" stroke="#c6c6c6" stroke-width="1.1"/><path d="M3.6,8 L10.6,2.6" stroke="#c2c2c2" stroke-width="2.1"/><path d="M3.2,5.4 V7.6" stroke="#d6d6d6" stroke-width="1"/></svg>
<div class="t" style="left:80.70px;top:406.50px;font-size:10.2px;font-weight:700;color:#d6261f">S</div>
<svg class="ab" style="left:599.80px;top:405.40px" width="12" height="11" viewBox="0 0 12 11"><rect x="1" y="1" width="7.8" height="8.8" fill="#f4f4f4"/><path d="M6.9,0.6 H1.3 Q0.6,0.6 0.6,1.3 V9.7 Q0.6,10.4 1.3,10.4 H8.9 Q9.6,10.4 9.6,9.7 V5.6" fill="none" stroke="#c6c6c6" stroke-width="1.1"/><path d="M3.6,8 L10.6,2.6" stroke="#c2c2c2" stroke-width="2.1"/><path d="M3.2,5.4 V7.6" stroke="#d6d6d6" stroke-width="1"/></svg>
<div class="t" style="left:80.70px;top:427.56px;font-size:10.2px;font-weight:700;color:#d6261f">N</div>
<svg class="ab" style="left:599.80px;top:426.46px" width="12" height="11" viewBox="0 0 12 11"><rect x="1" y="1" width="7.8" height="8.8" fill="#f4f4f4"/><path d="M6.9,0.6 H1.3 Q0.6,0.6 0.6,1.3 V9.7 Q0.6,10.4 1.3,10.4 H8.9 Q9.6,10.4 9.6,9.7 V5.6" fill="none" stroke="#c6c6c6" stroke-width="1.1"/><path d="M3.6,8 L10.6,2.6" stroke="#c2c2c2" stroke-width="2.1"/><path d="M3.2,5.4 V7.6" stroke="#d6d6d6" stroke-width="1"/></svg>
<div class="t" style="left:80.70px;top:448.62px;font-size:10.2px;font-weight:700;color:#222;letter-spacing:0.4px">P 6:00-14:00/8</div>
<div class="t" style="left:202.80px;top:448.62px;font-size:10.2px;font-weight:700;color:#222;letter-spacing:0.4px">6:00-16:00</div>
<div class="t" style="left:344.60px;top:448.62px;width:46.60px;text-align:center;font-size:10.2px;font-weight:700;color:#222;letter-spacing:0.4px">8:00</div>
<div class="t" style="left:450.90px;top:448.62px;font-size:10.2px;font-weight:700;color:#222;letter-spacing:0.4px">2:00</div>
<svg class="ab" style="left:599.80px;top:447.52px" width="12" height="11" viewBox="0 0 12 11"><rect x="1" y="1" width="7.8" height="8.8" fill="#f4f4f4"/><path d="M6.9,0.6 H1.3 Q0.6,0.6 0.6,1.3 V9.7 Q0.6,10.4 1.3,10.4 H8.9 Q9.6,10.4 9.6,9.7 V5.6" fill="none" stroke="#c6c6c6" stroke-width="1.1"/><path d="M3.6,8 L10.6,2.6" stroke="#c2c2c2" stroke-width="2.1"/><path d="M3.2,5.4 V7.6" stroke="#d6d6d6" stroke-width="1"/></svg>
<div class="t" style="left:80.70px;top:469.68px;font-size:10.2px;font-weight:700;color:#222;letter-spacing:0.4px">P 6:00-14:00/8</div>
<div class="t" style="left:271.70px;top:469.68px;width:72.90px;text-align:center;font-size:10.2px;font-weight:700;color:#1e8a1e">CH</div>
<svg class="ab" style="left:599.80px;top:468.58px" width="12" height="11" viewBox="0 0 12 11"><rect x="1" y="1" width="7.8" height="8.8" fill="#f4f4f4"/><path d="M6.9,0.6 H1.3 Q0.6,0.6 0.6,1.3 V9.7 Q0.6,10.4 1.3,10.4 H8.9 Q9.6,10.4 9.6,9.7 V5.6" fill="none" stroke="#c6c6c6" stroke-width="1.1"/><path d="M3.6,8 L10.6,2.6" stroke="#c2c2c2" stroke-width="2.1"/><path d="M3.2,5.4 V7.6" stroke="#d6d6d6" stroke-width="1"/></svg>
<div class="t" style="left:80.70px;top:490.74px;font-size:10.2px;font-weight:400;color:#222">P 6:00-14:00/8</div>
<div class="t" style="left:202.80px;top:490.74px;font-size:10.2px;font-weight:400;color:#222">6:00-14:00</div>
<div class="t" style="left:344.60px;top:490.74px;width:46.60px;text-align:center;font-size:10.2px;font-weight:400;color:#222">8:00</div>
<svg class="ab" style="left:599.80px;top:489.64px" width="12" height="11" viewBox="0 0 12 11"><rect x="1" y="1" width="7.8" height="8.8" fill="#f4f4f4"/><path d="M6.9,0.6 H1.3 Q0.6,0.6 0.6,1.3 V9.7 Q0.6,10.4 1.3,10.4 H8.9 Q9.6,10.4 9.6,9.7 V5.6" fill="none" stroke="#c6c6c6" stroke-width="1.1"/><path d="M3.6,8 L10.6,2.6" stroke="#c2c2c2" stroke-width="2.1"/><path d="M3.2,5.4 V7.6" stroke="#d6d6d6" stroke-width="1"/></svg>
<div class="t" style="left:80.70px;top:511.80px;font-size:10.2px;font-weight:400;color:#222">P 6:00-18:00/12</div>
<div class="t" style="left:202.80px;top:511.80px;font-size:10.2px;font-weight:400;color:#222">6:00-18:00</div>
<div class="t" style="left:344.60px;top:511.80px;width:46.60px;text-align:center;font-size:10.2px;font-weight:400;color:#222">12:00</div>
<svg class="ab" style="left:599.80px;top:510.70px" width="12" height="11" viewBox="0 0 12 11"><rect x="1" y="1" width="7.8" height="8.8" fill="#f4f4f4"/><path d="M6.9,0.6 H1.3 Q0.6,0.6 0.6,1.3 V9.7 Q0.6,10.4 1.3,10.4 H8.9 Q9.6,10.4 9.6,9.7 V5.6" fill="none" stroke="#c6c6c6" stroke-width="1.1"/><path d="M3.6,8 L10.6,2.6" stroke="#c2c2c2" stroke-width="2.1"/><path d="M3.2,5.4 V7.6" stroke="#d6d6d6" stroke-width="1"/></svg>
<div class="t" style="left:80.70px;top:532.86px;font-size:10.2px;font-weight:400;color:#222">P 6:00-14:00/8</div>
<div class="t" style="left:202.80px;top:532.86px;font-size:10.2px;font-weight:400;color:#222">6:00-14:00</div>
<div class="t" style="left:344.60px;top:532.86px;width:46.60px;text-align:center;font-size:10.2px;font-weight:400;color:#222">8:00</div>
<svg class="ab" style="left:599.80px;top:531.76px" width="12" height="11" viewBox="0 0 12 11"><rect x="1" y="1" width="7.8" height="8.8" fill="#f4f4f4"/><path d="M6.9,0.6 H1.3 Q0.6,0.6 0.6,1.3 V9.7 Q0.6,10.4 1.3,10.4 H8.9 Q9.6,10.4 9.6,9.7 V5.6" fill="none" stroke="#c6c6c6" stroke-width="1.1"/><path d="M3.6,8 L10.6,2.6" stroke="#c2c2c2" stroke-width="2.1"/><path d="M3.2,5.4 V7.6" stroke="#d6d6d6" stroke-width="1"/></svg>
<div class="t" style="left:80.70px;top:553.92px;font-size:10.2px;font-weight:400;color:#d6261f">S</div>
<svg class="ab" style="left:599.80px;top:552.82px" width="12" height="11" viewBox="0 0 12 11"><rect x="1" y="1" width="7.8" height="8.8" fill="#f4f4f4"/><path d="M6.9,0.6 H1.3 Q0.6,0.6 0.6,1.3 V9.7 Q0.6,10.4 1.3,10.4 H8.9 Q9.6,10.4 9.6,9.7 V5.6" fill="none" stroke="#c6c6c6" stroke-width="1.1"/><path d="M3.6,8 L10.6,2.6" stroke="#c2c2c2" stroke-width="2.1"/><path d="M3.2,5.4 V7.6" stroke="#d6d6d6" stroke-width="1"/></svg>
<div class="t" style="left:80.70px;top:574.98px;font-size:10.2px;font-weight:400;color:#d6261f">N</div>
<svg class="ab" style="left:599.80px;top:573.88px" width="12" height="11" viewBox="0 0 12 11"><rect x="1" y="1" width="7.8" height="8.8" fill="#f4f4f4"/><path d="M6.9,0.6 H1.3 Q0.6,0.6 0.6,1.3 V9.7 Q0.6,10.4 1.3,10.4 H8.9 Q9.6,10.4 9.6,9.7 V5.6" fill="none" stroke="#c6c6c6" stroke-width="1.1"/><path d="M3.6,8 L10.6,2.6" stroke="#c2c2c2" stroke-width="2.1"/><path d="M3.2,5.4 V7.6" stroke="#d6d6d6" stroke-width="1"/></svg>
<div class="t" style="left:80.70px;top:596.04px;font-size:10.2px;font-weight:400;color:#222">P 6:00-14:00/8</div>
<div class="t" style="left:202.80px;top:596.04px;font-size:10.2px;font-weight:400;color:#222">6:00-14:00</div>
<div class="t" style="left:344.60px;top:596.04px;width:46.60px;text-align:center;font-size:10.2px;font-weight:400;color:#222">8:00</div>
<svg class="ab" style="left:599.80px;top:594.94px" width="12" height="11" viewBox="0 0 12 11"><rect x="1" y="1" width="7.8" height="8.8" fill="#f4f4f4"/><path d="M6.9,0.6 H1.3 Q0.6,0.6 0.6,1.3 V9.7 Q0.6,10.4 1.3,10.4 H8.9 Q9.6,10.4 9.6,9.7 V5.6" fill="none" stroke="#c6c6c6" stroke-width="1.1"/><path d="M3.6,8 L10.6,2.6" stroke="#c2c2c2" stroke-width="2.1"/><path d="M3.2,5.4 V7.6" stroke="#d6d6d6" stroke-width="1"/></svg>
<div class="t" style="left:80.70px;top:617.10px;font-size:10.2px;font-weight:400;color:#222">P 6:00-14:00/8</div>
<div class="t" style="left:202.80px;top:617.10px;font-size:10.2px;font-weight:400;color:#222">6:00-14:00</div>
<div class="t" style="left:344.60px;top:617.10px;width:46.60px;text-align:center;font-size:10.2px;font-weight:400;color:#222">8:00</div>
<svg class="ab" style="left:599.80px;top:616.00px" width="12" height="11" viewBox="0 0 12 11"><rect x="1" y="1" width="7.8" height="8.8" fill="#f4f4f4"/><path d="M6.9,0.6 H1.3 Q0.6,0.6 0.6,1.3 V9.7 Q0.6,10.4 1.3,10.4 H8.9 Q9.6,10.4 9.6,9.7 V5.6" fill="none" stroke="#c6c6c6" stroke-width="1.1"/><path d="M3.6,8 L10.6,2.6" stroke="#c2c2c2" stroke-width="2.1"/><path d="M3.2,5.4 V7.6" stroke="#d6d6d6" stroke-width="1"/></svg>
<div class="t" style="left:80.70px;top:638.16px;font-size:10.2px;font-weight:400;color:#222">P 6:00-14:00/8</div>
<div class="t" style="left:202.80px;top:638.16px;font-size:10.2px;font-weight:400;color:#222">6:00-14:00</div>
<div class="t" style="left:344.60px;top:638.16px;width:46.60px;text-align:center;font-size:10.2px;font-weight:400;color:#222">8:00</div>
<svg class="ab" style="left:599.80px;top:637.06px" width="12" height="11" viewBox="0 0 12 11"><rect x="1" y="1" width="7.8" height="8.8" fill="#f4f4f4"/><path d="M6.9,0.6 H1.3 Q0.6,0.6 0.6,1.3 V9.7 Q0.6,10.4 1.3,10.4 H8.9 Q9.6,10.4 9.6,9.7 V5.6" fill="none" stroke="#c6c6c6" stroke-width="1.1"/><path d="M3.6,8 L10.6,2.6" stroke="#c2c2c2" stroke-width="2.1"/><path d="M3.2,5.4 V7.6" stroke="#d6d6d6" stroke-width="1"/></svg>
<div class="t" style="left:80.70px;top:659.22px;font-size:10.2px;font-weight:400;color:#222">P 6:00-14:00/8</div>
<div class="t" style="left:202.80px;top:659.22px;font-size:10.2px;font-weight:400;color:#222">6:00-14:00</div>
<div class="t" style="left:344.60px;top:659.22px;width:46.60px;text-align:center;font-size:10.2px;font-weight:400;color:#222">8:00</div>
<svg class="ab" style="left:599.80px;top:658.12px" width="12" height="11" viewBox="0 0 12 11"><rect x="1" y="1" width="7.8" height="8.8" fill="#f4f4f4"/><path d="M6.9,0.6 H1.3 Q0.6,0.6 0.6,1.3 V9.7 Q0.6,10.4 1.3,10.4 H8.9 Q9.6,10.4 9.6,9.7 V5.6" fill="none" stroke="#c6c6c6" stroke-width="1.1"/><path d="M3.6,8 L10.6,2.6" stroke="#c2c2c2" stroke-width="2.1"/><path d="M3.2,5.4 V7.6" stroke="#d6d6d6" stroke-width="1"/></svg>
<div class="t" style="left:80.70px;top:680.28px;font-size:10.2px;font-weight:400;color:#222">P 6:00-14:00/8</div>
<div class="t" style="left:202.80px;top:680.28px;font-size:10.2px;font-weight:400;color:#222">6:00-14:00</div>
<div class="t" style="left:344.60px;top:680.28px;width:46.60px;text-align:center;font-size:10.2px;font-weight:400;color:#222">8:00</div>
<svg class="ab" style="left:599.80px;top:679.18px" width="12" height="11" viewBox="0 0 12 11"><rect x="1" y="1" width="7.8" height="8.8" fill="#f4f4f4"/><path d="M6.9,0.6 H1.3 Q0.6,0.6 0.6,1.3 V9.7 Q0.6,10.4 1.3,10.4 H8.9 Q9.6,10.4 9.6,9.7 V5.6" fill="none" stroke="#c6c6c6" stroke-width="1.1"/><path d="M3.6,8 L10.6,2.6" stroke="#c2c2c2" stroke-width="2.1"/><path d="M3.2,5.4 V7.6" stroke="#d6d6d6" stroke-width="1"/></svg>
<div class="t" style="left:80.70px;top:701.34px;font-size:10.2px;font-weight:400;color:#d6261f">S</div>
<svg class="ab" style="left:599.80px;top:700.24px" width="12" height="11" viewBox="0 0 12 11"><rect x="1" y="1" width="7.8" height="8.8" fill="#f4f4f4"/><path d="M6.9,0.6 H1.3 Q0.6,0.6 0.6,1.3 V9.7 Q0.6,10.4 1.3,10.4 H8.9 Q9.6,10.4 9.6,9.7 V5.6" fill="none" stroke="#c6c6c6" stroke-width="1.1"/><path d="M3.6,8 L10.6,2.6" stroke="#c2c2c2" stroke-width="2.1"/><path d="M3.2,5.4 V7.6" stroke="#d6d6d6" stroke-width="1"/></svg>
<div class="t" style="left:80.70px;top:722.40px;font-size:10.2px;font-weight:400;color:#d6261f">N</div>
<svg class="ab" style="left:599.80px;top:721.30px" width="12" height="11" viewBox="0 0 12 11"><rect x="1" y="1" width="7.8" height="8.8" fill="#f4f4f4"/><path d="M6.9,0.6 H1.3 Q0.6,0.6 0.6,1.3 V9.7 Q0.6,10.4 1.3,10.4 H8.9 Q9.6,10.4 9.6,9.7 V5.6" fill="none" stroke="#c6c6c6" stroke-width="1.1"/><path d="M3.6,8 L10.6,2.6" stroke="#c2c2c2" stroke-width="2.1"/><path d="M3.2,5.4 V7.6" stroke="#d6d6d6" stroke-width="1"/></svg>
<div class="t" style="left:80.70px;top:743.46px;font-size:10.2px;font-weight:400;color:#222">P 6:00-14:00/8</div>
<div class="t" style="left:202.80px;top:743.46px;font-size:10.2px;font-weight:400;color:#222">6:00-14:00</div>
<div class="t" style="left:344.60px;top:743.46px;width:46.60px;text-align:center;font-size:10.2px;font-weight:400;color:#222">8:00</div>
<svg class="ab" style="left:599.80px;top:742.36px" width="12" height="11" viewBox="0 0 12 11"><rect x="1" y="1" width="7.8" height="8.8" fill="#f4f4f4"/><path d="M6.9,0.6 H1.3 Q0.6,0.6 0.6,1.3 V9.7 Q0.6,10.4 1.3,10.4 H8.9 Q9.6,10.4 9.6,9.7 V5.6" fill="none" stroke="#c6c6c6" stroke-width="1.1"/><path d="M3.6,8 L10.6,2.6" stroke="#c2c2c2" stroke-width="2.1"/><path d="M3.2,5.4 V7.6" stroke="#d6d6d6" stroke-width="1"/></svg>
<div class="t" style="left:80.70px;top:764.52px;font-size:10.2px;font-weight:400;color:#222">P 6:00-14:00/8</div>
<div class="t" style="left:202.80px;top:764.52px;font-size:10.2px;font-weight:400;color:#222">6:00-14:00</div>
<div class="t" style="left:344.60px;top:764.52px;width:46.60px;text-align:center;font-size:10.2px;font-weight:400;color:#222">8:00</div>
<svg class="ab" style="left:599.80px;top:763.42px" width="12" height="11" viewBox="0 0 12 11"><rect x="1" y="1" width="7.8" height="8.8" fill="#f4f4f4"/><path d="M6.9,0.6 H1.3 Q0.6,0.6 0.6,1.3 V9.7 Q0.6,10.4 1.3,10.4 H8.9 Q9.6,10.4 9.6,9.7 V5.6" fill="none" stroke="#c6c6c6" stroke-width="1.1"/><path d="M3.6,8 L10.6,2.6" stroke="#c2c2c2" stroke-width="2.1"/><path d="M3.2,5.4 V7.6" stroke="#d6d6d6" stroke-width="1"/></svg>
<div class="t" style="left:80.70px;top:785.58px;font-size:10.2px;font-weight:400;color:#222">P 6:00-14:00/8</div>
<div class="t" style="left:202.80px;top:785.58px;font-size:10.2px;font-weight:400;color:#222">6:00-14:00</div>
<div class="t" style="left:344.60px;top:785.58px;width:46.60px;text-align:center;font-size:10.2px;font-weight:400;color:#222">8:00</div>
<svg class="ab" style="left:599.80px;top:784.48px" width="12" height="11" viewBox="0 0 12 11"><rect x="1" y="1" width="7.8" height="8.8" fill="#f4f4f4"/><path d="M6.9,0.6 H1.3 Q0.6,0.6 0.6,1.3 V9.7 Q0.6,10.4 1.3,10.4 H8.9 Q9.6,10.4 9.6,9.7 V5.6" fill="none" stroke="#c6c6c6" stroke-width="1.1"/><path d="M3.6,8 L10.6,2.6" stroke="#c2c2c2" stroke-width="2.1"/><path d="M3.2,5.4 V7.6" stroke="#d6d6d6" stroke-width="1"/></svg>
<div class="t" style="left:80.70px;top:806.64px;font-size:10.2px;font-weight:400;color:#222">P 6:00-14:00/8</div>
<div class="t" style="left:202.80px;top:806.64px;font-size:10.2px;font-weight:400;color:#222">6:00-14:00</div>
<div class="t" style="left:344.60px;top:806.64px;width:46.60px;text-align:center;font-size:10.2px;font-weight:400;color:#222">8:00</div>
<svg class="ab" style="left:599.80px;top:805.54px" width="12" height="11" viewBox="0 0 12 11"><rect x="1" y="1" width="7.8" height="8.8" fill="#f4f4f4"/><path d="M6.9,0.6 H1.3 Q0.6,0.6 0.6,1.3 V9.7 Q0.6,10.4 1.3,10.4 H8.9 Q9.6,10.4 9.6,9.7 V5.6" fill="none" stroke="#c6c6c6" stroke-width="1.1"/><path d="M3.6,8 L10.6,2.6" stroke="#c2c2c2" stroke-width="2.1"/><path d="M3.2,5.4 V7.6" stroke="#d6d6d6" stroke-width="1"/></svg>
<div class="t" style="left:80.70px;top:827.70px;font-size:10.2px;font-weight:400;color:#222">P 6:00-14:00/8</div>
<div class="t" style="left:202.80px;top:827.70px;font-size:10.2px;font-weight:400;color:#222">6:00-14:00</div>
<div class="t" style="left:344.60px;top:827.70px;width:46.60px;text-align:center;font-size:10.2px;font-weight:400;color:#222">8:00</div>
<svg class="ab" style="left:599.80px;top:826.60px" width="12" height="11" viewBox="0 0 12 11"><rect x="1" y="1" width="7.8" height="8.8" fill="#f4f4f4"/><path d="M6.9,0.6 H1.3 Q0.6,0.6 0.6,1.3 V9.7 Q0.6,10.4 1.3,10.4 H8.9 Q9.6,10.4 9.6,9.7 V5.6" fill="none" stroke="#c6c6c6" stroke-width="1.1"/><path d="M3.6,8 L10.6,2.6" stroke="#c2c2c2" stroke-width="2.1"/><path d="M3.2,5.4 V7.6" stroke="#d6d6d6" stroke-width="1"/></svg>
<div class="ab" style="left:72px;top:842.36px;width:557px;height:2px;background:#e0e0e0"></div>
<div class="t" style="left:80.7px;top:848.50px;font-size:9.45px;color:#333">Norma miesięczna</div>
<div class="t" style="left:441.5px;top:848.50px;width:60px;text-align:center;font-size:9.45px;color:#333">184:00</div>
<div class="t" style="left:80.7px;top:867.60px;font-size:9.45px;color:#333">Dni pracy</div>
<div class="t" style="left:441.5px;top:867.60px;width:60px;text-align:center;font-size:9.45px;color:#333">23</div>
<div class="t" style="left:80.7px;top:886.70px;font-size:9.45px;color:#333">Liczba sobót</div>
<div class="t" style="left:441.5px;top:886.70px;width:60px;text-align:center;font-size:9.45px;color:#333">4</div>
<div class="t" style="left:80.7px;top:905.80px;font-size:9.45px;color:#333">Niedziele i święta</div>
<div class="t" style="left:441.5px;top:905.80px;width:60px;text-align:center;font-size:9.45px;color:#333">4</div>
<div class="ab" style="left:630px;top:124px;width:557px;height:45px;background:#f5f5f5"></div>
<div class="ab" style="left:635.8px;top:147px;width:510.2px;height:18px;border-radius:3px;background:#ff6100"></div>
<div class="t" style="left:635.8px;top:151.5px;width:510.2px;text-align:center;font-size:9.3px;font-weight:700;color:#fff8e8">Oczekuje na zatwierdzenie HR</div>
<svg class="ab" style="left:1154px;top:137px" width="19" height="18" viewBox="0 0 19 18"><path d="M15.27,6.74 L17.47,7.58 L17.47,10.42 L15.27,11.26 L15.18,11.48 L16.15,13.63 L14.13,15.65 L11.98,14.68 L11.76,14.77 L10.92,16.97 L8.08,16.97 L7.24,14.77 L7.02,14.68 L4.87,15.65 L2.85,13.63 L3.82,11.48 L3.73,11.26 L1.53,10.42 L1.53,7.58 L3.73,6.74 L3.82,6.52 L2.85,4.37 L4.87,2.35 L7.02,3.32 L7.24,3.23 L8.08,1.03 L10.92,1.03 L11.76,3.23 L11.98,3.32 L14.13,2.35 L16.15,4.37 L15.18,6.52 Z" fill="none" stroke="#444" stroke-width="1.1" stroke-linejoin="round"/><circle cx="9.5" cy="9" r="3.3" fill="none" stroke="#444" stroke-width="1.1"/></svg>
<svg class="ab" style="left:839px;top:131px" width="15" height="12" viewBox="0 0 15 12"><path d="M1,6.2 L5.2,10.4 L14,1.4" fill="none" stroke="#1f9b2a" stroke-width="2.2"/></svg>
<div class="t" style="left:861px;top:130.7px;font-size:12.3px;font-weight:400;-webkit-text-stroke:0.3px #1e2430;color:#1e2430"><span style="display:inline-block;transform-origin:0 0;transform:scaleX(0.9881)">Dzik Aneta</span></div>
<div class="ab" style="left:925px;top:129.2px;width:15px;height:14.8px;border-radius:2.5px;background:#666"></div><div class="t" style="left:925px;top:130.6px;width:15px;text-align:center;font-size:12.6px;font-weight:700;color:#fff">R</div>
<div class="ab" style="left:630px;top:167.8px;width:557px;height:22.7px;background:#f8f8f8;border-top:1px solid #e6e6e6;border-bottom:1px solid #e2e2e2"></div>
<div class="t" style="left:638.70px;top:173.6px;font-size:11px;color:#333"><span style="display:inline-block;transform:scaleX(0.89);transform-origin:0 0">Plan</span></div>
<div class="ab" style="left:750.00px;top:169px;width:1px;height:21px;background:#e6e6e6"></div>
<div class="t" style="left:750.50px;top:173.6px;width:79.20px;text-align:center;font-size:11px;color:#333"><span style="display:inline-block;transform:scaleX(0.9);transform-origin:50% 0">Czas pracy</span></div>
<div class="ab" style="left:829.20px;top:169px;width:1px;height:21px;background:#e6e6e6"></div>
<div class="t" style="left:829.70px;top:173.6px;width:72.90px;text-align:center;font-size:11px;color:#333"><span style="display:inline-block;transform:scaleX(0.9);transform-origin:50% 0">Absencja</span></div>
<div class="ab" style="left:902.10px;top:169px;width:1px;height:21px;background:#e6e6e6"></div>
<div class="t" style="left:902.60px;top:173.6px;width:46.60px;text-align:center;font-size:11px;color:#333"><span style="display:inline-block;transform:scaleX(0.9);transform-origin:50% 0">Godz.</span></div>
<div class="ab" style="left:948.70px;top:169px;width:1px;height:21px;background:#e6e6e6"></div>
<div class="t" style="left:949.20px;top:173.6px;width:49.40px;text-align:center;font-size:11px;color:#333"><span style="display:inline-block;transform:scaleX(0.9);transform-origin:50% 0">G. nocne</span></div>
<div class="ab" style="left:998.10px;top:169px;width:1px;height:21px;background:#e6e6e6"></div>
<div class="t" style="left:998.60px;top:173.6px;width:50.90px;text-align:center;font-size:11px;color:#333"><span style="display:inline-block;transform:scaleX(0.9);transform-origin:50% 0">N50</span></div>
<div class="ab" style="left:1049.00px;top:169px;width:1px;height:21px;background:#e6e6e6"></div>
<div class="t" style="left:1049.50px;top:173.6px;width:51.30px;text-align:center;font-size:11px;color:#333"><span style="display:inline-block;transform:scaleX(0.9);transform-origin:50% 0">N100</span></div>
<div class="ab" style="left:1100.30px;top:169px;width:1px;height:21px;background:#e6e6e6"></div>
<div class="t" style="left:1100.80px;top:173.6px;width:51.50px;text-align:center;font-size:11px;color:#333"><span style="display:inline-block;transform:scaleX(0.9);transform-origin:50% 0">N tyg.</span></div>
<div class="ab" style="left:1151.80px;top:169px;width:1px;height:21px;background:#e6e6e6"></div>
<div class="t" style="left:1152.30px;top:173.6px;width:34.70px;text-align:center;font-size:11px;color:#333"><span style="display:inline-block;transform:scaleX(0.9);transform-origin:50% 0">Uwagi</span></div>
<div class="ab" style="left:630px;top:190px;width:557px;height:651.00px;background:#fff"></div>
<div class="ab" style="left:630.00px;top:190px;width:120.50px;height:651.00px;background:#f3f3f3"></div>
<div class="ab" style="left:902.60px;top:190px;width:46.60px;height:651.00px;background:#f3f3f3"></div>
<div class="ab" style="left:949.20px;top:190px;width:49.40px;height:651.00px;background:#f3f3f3"></div>
<div class="ab" style="left:630px;top:273.50px;width:557px;height:21.00px;background:#fde7e7"></div>
<div class="ab" style="left:630px;top:420.50px;width:557px;height:21.00px;background:#fde7e7"></div>
<div class="ab" style="left:630px;top:567.50px;width:557px;height:21.00px;background:#fde7e7"></div>
<div class="ab" style="left:630px;top:714.50px;width:557px;height:21.00px;background:#fde7e7"></div>
<div class="ab" style="left:630px;top:209.90px;width:557px;height:1px;background:rgba(0,0,0,0.085)"></div>
<div class="ab" style="left:630px;top:230.90px;width:557px;height:1px;background:rgba(0,0,0,0.085)"></div>
<div class="ab" style="left:630px;top:251.90px;width:557px;height:1px;background:rgba(0,0,0,0.085)"></div>
<div class="ab" style="left:630px;top:272.90px;width:557px;height:1px;background:rgba(0,0,0,0.085)"></div>
<div class="ab" style="left:630px;top:293.90px;width:557px;height:1px;background:rgba(0,0,0,0.085)"></div>
<div class="ab" style="left:630px;top:314.90px;width:557px;height:1px;background:rgba(0,0,0,0.085)"></div>
<div class="ab" style="left:630px;top:335.90px;width:557px;height:1px;background:rgba(0,0,0,0.085)"></div>
<div class="ab" style="left:630px;top:356.90px;width:557px;height:1px;background:rgba(0,0,0,0.085)"></div>
<div class="ab" style="left:630px;top:377.90px;width:557px;height:1px;background:rgba(0,0,0,0.085)"></div>
<div class="ab" style="left:630px;top:398.90px;width:557px;height:1px;background:rgba(0,0,0,0.085)"></div>
<div class="ab" style="left:630px;top:419.90px;width:557px;height:1px;background:rgba(0,0,0,0.085)"></div>
<div class="ab" style="left:630px;top:440.90px;width:557px;height:1px;background:rgba(0,0,0,0.085)"></div>
<div class="ab" style="left:630px;top:461.90px;width:557px;height:1px;background:rgba(0,0,0,0.085)"></div>
<div class="ab" style="left:630px;top:482.90px;width:557px;height:1px;background:rgba(0,0,0,0.085)"></div>
<div class="ab" style="left:630px;top:503.90px;width:557px;height:1px;background:rgba(0,0,0,0.085)"></div>
<div class="ab" style="left:630px;top:524.90px;width:557px;height:1px;background:rgba(0,0,0,0.085)"></div>
<div class="ab" style="left:630px;top:545.90px;width:557px;height:1px;background:rgba(0,0,0,0.085)"></div>
<div class="ab" style="left:630px;top:566.90px;width:557px;height:1px;background:rgba(0,0,0,0.085)"></div>
<div class="ab" style="left:630px;top:587.90px;width:557px;height:1px;background:rgba(0,0,0,0.085)"></div>
<div class="ab" style="left:630px;top:608.90px;width:557px;height:1px;background:rgba(0,0,0,0.085)"></div>
<div class="ab" style="left:630px;top:629.90px;width:557px;height:1px;background:rgba(0,0,0,0.085)"></div>
<div class="ab" style="left:630px;top:650.90px;width:557px;height:1px;background:rgba(0,0,0,0.085)"></div>
<div class="ab" style="left:630px;top:671.90px;width:557px;height:1px;background:rgba(0,0,0,0.085)"></div>
<div class="ab" style="left:630px;top:692.90px;width:557px;height:1px;background:rgba(0,0,0,0.085)"></div>
<div class="ab" style="left:630px;top:713.90px;width:557px;height:1px;background:rgba(0,0,0,0.085)"></div>
<div class="ab" style="left:630px;top:734.90px;width:557px;height:1px;background:rgba(0,0,0,0.085)"></div>
<div class="ab" style="left:630px;top:755.90px;width:557px;height:1px;background:rgba(0,0,0,0.085)"></div>
<div class="ab" style="left:630px;top:776.90px;width:557px;height:1px;background:rgba(0,0,0,0.085)"></div>
<div class="ab" style="left:630px;top:797.90px;width:557px;height:1px;background:rgba(0,0,0,0.085)"></div>
<div class="ab" style="left:630px;top:818.90px;width:557px;height:1px;background:rgba(0,0,0,0.085)"></div>
<div class="ab" style="left:630px;top:839.90px;width:557px;height:1px;background:rgba(0,0,0,0.085)"></div>
<div class="ab" style="left:750.50px;top:190px;width:1px;height:651.00px;background:rgba(0,0,0,0.068)"></div>
<div class="ab" style="left:829.70px;top:190px;width:1px;height:651.00px;background:rgba(0,0,0,0.068)"></div>
<div class="ab" style="left:902.60px;top:190px;width:1px;height:651.00px;background:rgba(0,0,0,0.068)"></div>
<div class="ab" style="left:949.20px;top:190px;width:1px;height:651.00px;background:rgba(0,0,0,0.068)"></div>
<div class="ab" style="left:998.60px;top:190px;width:1px;height:651.00px;background:rgba(0,0,0,0.068)"></div>
<div class="ab" style="left:1049.50px;top:190px;width:1px;height:651.00px;background:rgba(0,0,0,0.068)"></div>
<div class="ab" style="left:1100.80px;top:190px;width:1px;height:651.00px;background:rgba(0,0,0,0.068)"></div>
<div class="ab" style="left:1152.30px;top:190px;width:1px;height:651.00px;background:rgba(0,0,0,0.068)"></div>
<div class="t" style="left:638.70px;top:195.90px;font-size:10.2px;font-weight:400;color:#222">P 6:00-14:00/8</div>
<div class="t" style="left:760.80px;top:195.90px;font-size:10.2px;font-weight:400;color:#222">6:00-14:00</div>
<div class="t" style="left:902.60px;top:195.90px;width:46.60px;text-align:center;font-size:10.2px;font-weight:400;color:#222">8:00</div>
<svg class="ab" style="left:1157.80px;top:194.80px" width="12" height="11" viewBox="0 0 12 11"><rect x="1" y="1" width="7.8" height="8.8" fill="#f4f4f4"/><path d="M6.9,0.6 H1.3 Q0.6,0.6 0.6,1.3 V9.7 Q0.6,10.4 1.3,10.4 H8.9 Q9.6,10.4 9.6,9.7 V5.6" fill="none" stroke="#c6c6c6" stroke-width="1.1"/><path d="M3.6,8 L10.6,2.6" stroke="#c2c2c2" stroke-width="2.1"/><path d="M3.2,5.4 V7.6" stroke="#d6d6d6" stroke-width="1"/></svg>
<div class="t" style="left:638.70px;top:216.90px;font-size:10.2px;font-weight:400;color:#222">P 6:00-14:00/8</div>
<div class="t" style="left:760.80px;top:216.90px;font-size:10.2px;font-weight:400;color:#222">6:00-14:00</div>
<div class="t" style="left:902.60px;top:216.90px;width:46.60px;text-align:center;font-size:10.2px;font-weight:400;color:#222">8:00</div>
<svg class="ab" style="left:1157.80px;top:215.80px" width="12" height="11" viewBox="0 0 12 11"><rect x="1" y="1" width="7.8" height="8.8" fill="#f4f4f4"/><path d="M6.9,0.6 H1.3 Q0.6,0.6 0.6,1.3 V9.7 Q0.6,10.4 1.3,10.4 H8.9 Q9.6,10.4 9.6,9.7 V5.6" fill="none" stroke="#c6c6c6" stroke-width="1.1"/><path d="M3.6,8 L10.6,2.6" stroke="#c2c2c2" stroke-width="2.1"/><path d="M3.2,5.4 V7.6" stroke="#d6d6d6" stroke-width="1"/></svg>
<div class="t" style="left:638.70px;top:237.90px;font-size:10.2px;font-weight:400;color:#222">P 6:00-14:00/8</div>
<div class="t" style="left:760.80px;top:237.90px;font-size:10.2px;font-weight:400;color:#222">6:00-14:00</div>
<div class="t" style="left:902.60px;top:237.90px;width:46.60px;text-align:center;font-size:10.2px;font-weight:400;color:#222">8:00</div>
<svg class="ab" style="left:1157.80px;top:236.80px" width="12" height="11" viewBox="0 0 12 11"><rect x="1" y="1" width="7.8" height="8.8" fill="#f4f4f4"/><path d="M6.9,0.6 H1.3 Q0.6,0.6 0.6,1.3 V9.7 Q0.6,10.4 1.3,10.4 H8.9 Q9.6,10.4 9.6,9.7 V5.6" fill="none" stroke="#c6c6c6" stroke-width="1.1"/><path d="M3.6,8 L10.6,2.6" stroke="#c2c2c2" stroke-width="2.1"/><path d="M3.2,5.4 V7.6" stroke="#d6d6d6" stroke-width="1"/></svg>
<div class="t" style="left:638.70px;top:258.90px;font-size:10.2px;font-weight:400;color:#d6261f">S</div>
<svg class="ab" style="left:1157.80px;top:257.80px" width="12" height="11" viewBox="0 0 12 11"><rect x="1" y="1" width="7.8" height="8.8" fill="#f4f4f4"/><path d="M6.9,0.6 H1.3 Q0.6,0.6 0.6,1.3 V9.7 Q0.6,10.4 1.3,10.4 H8.9 Q9.6,10.4 9.6,9.7 V5.6" fill="none" stroke="#c6c6c6" stroke-width="1.1"/><path d="M3.6,8 L10.6,2.6" stroke="#c2c2c2" stroke-width="2.1"/><path d="M3.2,5.4 V7.6" stroke="#d6d6d6" stroke-width="1"/></svg>
<div class="t" style="left:638.70px;top:279.90px;font-size:10.2px;font-weight:400;color:#d6261f">N</div>
<svg class="ab" style="left:1157.80px;top:278.80px" width="12" height="11" viewBox="0 0 12 11"><rect x="1" y="1" width="7.8" height="8.8" fill="#f4f4f4"/><path d="M6.9,0.6 H1.3 Q0.6,0.6 0.6,1.3 V9.7 Q0.6,10.4 1.3,10.4 H8.9 Q9.6,10.4 9.6,9.7 V5.6" fill="none" stroke="#c6c6c6" stroke-width="1.1"/><path d="M3.6,8 L10.6,2.6" stroke="#c2c2c2" stroke-width="2.1"/><path d="M3.2,5.4 V7.6" stroke="#d6d6d6" stroke-width="1"/></svg>
<div class="t" style="left:638.70px;top:300.90px;font-size:10.2px;font-weight:400;color:#222">P 6:00-14:00/8</div>
<div class="t" style="left:760.80px;top:300.90px;font-size:10.2px;font-weight:400;color:#222">6:00-14:00</div>
<div class="t" style="left:902.60px;top:300.90px;width:46.60px;text-align:center;font-size:10.2px;font-weight:400;color:#222">8:00</div>
<svg class="ab" style="left:1157.80px;top:299.80px" width="12" height="11" viewBox="0 0 12 11"><rect x="1" y="1" width="7.8" height="8.8" fill="#f4f4f4"/><path d="M6.9,0.6 H1.3 Q0.6,0.6 0.6,1.3 V9.7 Q0.6,10.4 1.3,10.4 H8.9 Q9.6,10.4 9.6,9.7 V5.6" fill="none" stroke="#c6c6c6" stroke-width="1.1"/><path d="M3.6,8 L10.6,2.6" stroke="#c2c2c2" stroke-width="2.1"/><path d="M3.2,5.4 V7.6" stroke="#d6d6d6" stroke-width="1"/></svg>
<div class="t" style="left:638.70px;top:321.90px;font-size:10.2px;font-weight:400;color:#222">P 6:00-14:00/8</div>
<div class="t" style="left:760.80px;top:321.90px;font-size:10.2px;font-weight:400;color:#222">6:00-14:00</div>
<div class="t" style="left:902.60px;top:321.90px;width:46.60px;text-align:center;font-size:10.2px;font-weight:400;color:#222">8:00</div>
<svg class="ab" style="left:1157.80px;top:320.80px" width="12" height="11" viewBox="0 0 12 11"><rect x="1" y="1" width="7.8" height="8.8" fill="#f4f4f4"/><path d="M6.9,0.6 H1.3 Q0.6,0.6 0.6,1.3 V9.7 Q0.6,10.4 1.3,10.4 H8.9 Q9.6,10.4 9.6,9.7 V5.6" fill="none" stroke="#c6c6c6" stroke-width="1.1"/><path d="M3.6,8 L10.6,2.6" stroke="#c2c2c2" stroke-width="2.1"/><path d="M3.2,5.4 V7.6" stroke="#d6d6d6" stroke-width="1"/></svg>
<div class="t" style="left:638.70px;top:342.90px;font-size:10.2px;font-weight:400;color:#222">P 6:00-14:00/8</div>
<div class="t" style="left:760.80px;top:342.90px;font-size:10.2px;font-weight:400;color:#222">6:00-14:00</div>
<div class="t" style="left:902.60px;top:342.90px;width:46.60px;text-align:center;font-size:10.2px;font-weight:400;color:#222">8:00</div>
<svg class="ab" style="left:1157.80px;top:341.80px" width="12" height="11" viewBox="0 0 12 11"><rect x="1" y="1" width="7.8" height="8.8" fill="#f4f4f4"/><path d="M6.9,0.6 H1.3 Q0.6,0.6 0.6,1.3 V9.7 Q0.6,10.4 1.3,10.4 H8.9 Q9.6,10.4 9.6,9.7 V5.6" fill="none" stroke="#c6c6c6" stroke-width="1.1"/><path d="M3.6,8 L10.6,2.6" stroke="#c2c2c2" stroke-width="2.1"/><path d="M3.2,5.4 V7.6" stroke="#d6d6d6" stroke-width="1"/></svg>
<div class="t" style="left:638.70px;top:363.90px;font-size:10.2px;font-weight:400;color:#222">P 6:00-14:00/8</div>
<div class="t" style="left:760.80px;top:363.90px;font-size:10.2px;font-weight:400;color:#222">6:00-14:00</div>
<div class="t" style="left:902.60px;top:363.90px;width:46.60px;text-align:center;font-size:10.2px;font-weight:400;color:#222">8:00</div>
<svg class="ab" style="left:1157.80px;top:362.80px" width="12" height="11" viewBox="0 0 12 11"><rect x="1" y="1" width="7.8" height="8.8" fill="#f4f4f4"/><path d="M6.9,0.6 H1.3 Q0.6,0.6 0.6,1.3 V9.7 Q0.6,10.4 1.3,10.4 H8.9 Q9.6,10.4 9.6,9.7 V5.6" fill="none" stroke="#c6c6c6" stroke-width="1.1"/><path d="M3.6,8 L10.6,2.6" stroke="#c2c2c2" stroke-width="2.1"/><path d="M3.2,5.4 V7.6" stroke="#d6d6d6" stroke-width="1"/></svg>
<div class="t" style="left:638.70px;top:384.90px;font-size:10.2px;font-weight:400;color:#222">P 6:00-14:00/8</div>
<div class="t" style="left:760.80px;top:384.90px;font-size:10.2px;font-weight:400;color:#222">6:00-14:00</div>
<div class="t" style="left:902.60px;top:384.90px;width:46.60px;text-align:center;font-size:10.2px;font-weight:400;color:#222">8:00</div>
<svg class="ab" style="left:1157.80px;top:383.80px" width="12" height="11" viewBox="0 0 12 11"><rect x="1" y="1" width="7.8" height="8.8" fill="#f4f4f4"/><path d="M6.9,0.6 H1.3 Q0.6,0.6 0.6,1.3 V9.7 Q0.6,10.4 1.3,10.4 H8.9 Q9.6,10.4 9.6,9.7 V5.6" fill="none" stroke="#c6c6c6" stroke-width="1.1"/><path d="M3.6,8 L10.6,2.6" stroke="#c2c2c2" stroke-width="2.1"/><path d="M3.2,5.4 V7.6" stroke="#d6d6d6" stroke-width="1"/></svg>
<div class="t" style="left:638.70px;top:405.90px;font-size:10.2px;font-weight:400;color:#d6261f">S</div>
<svg class="ab" style="left:1157.80px;top:404.80px" width="12" height="11" viewBox="0 0 12 11"><rect x="1" y="1" width="7.8" height="8.8" fill="#f4f4f4"/><path d="M6.9,0.6 H1.3 Q0.6,0.6 0.6,1.3 V9.7 Q0.6,10.4 1.3,10.4 H8.9 Q9.6,10.4 9.6,9.7 V5.6" fill="none" stroke="#c6c6c6" stroke-width="1.1"/><path d="M3.6,8 L10.6,2.6" stroke="#c2c2c2" stroke-width="2.1"/><path d="M3.2,5.4 V7.6" stroke="#d6d6d6" stroke-width="1"/></svg>
<div class="t" style="left:638.70px;top:426.90px;font-size:10.2px;font-weight:400;color:#d6261f">N</div>
<svg class="ab" style="left:1157.80px;top:425.80px" width="12" height="11" viewBox="0 0 12 11"><rect x="1" y="1" width="7.8" height="8.8" fill="#f4f4f4"/><path d="M6.9,0.6 H1.3 Q0.6,0.6 0.6,1.3 V9.7 Q0.6,10.4 1.3,10.4 H8.9 Q9.6,10.4 9.6,9.7 V5.6" fill="none" stroke="#c6c6c6" stroke-width="1.1"/><path d="M3.6,8 L10.6,2.6" stroke="#c2c2c2" stroke-width="2.1"/><path d="M3.2,5.4 V7.6" stroke="#d6d6d6" stroke-width="1"/></svg>
<div class="t" style="left:638.70px;top:447.90px;font-size:10.2px;font-weight:400;color:#222">P 6:00-14:00/8</div>
<div class="t" style="left:760.80px;top:447.90px;font-size:10.2px;font-weight:400;color:#222">6:00-14:00</div>
<div class="t" style="left:902.60px;top:447.90px;width:46.60px;text-align:center;font-size:10.2px;font-weight:400;color:#222">8:00</div>
<svg class="ab" style="left:1157.80px;top:446.80px" width="12" height="11" viewBox="0 0 12 11"><rect x="1" y="1" width="7.8" height="8.8" fill="#f4f4f4"/><path d="M6.9,0.6 H1.3 Q0.6,0.6 0.6,1.3 V9.7 Q0.6,10.4 1.3,10.4 H8.9 Q9.6,10.4 9.6,9.7 V5.6" fill="none" stroke="#c6c6c6" stroke-width="1.1"/><path d="M3.6,8 L10.6,2.6" stroke="#c2c2c2" stroke-width="2.1"/><path d="M3.2,5.4 V7.6" stroke="#d6d6d6" stroke-width="1"/></svg>
<div class="t" style="left:638.70px;top:468.90px;font-size:10.2px;font-weight:400;color:#222">P 6:00-14:00/8</div>
<div class="t" style="left:760.80px;top:468.90px;font-size:10.2px;font-weight:400;color:#222">6:00-14:00</div>
<div class="t" style="left:902.60px;top:468.90px;width:46.60px;text-align:center;font-size:10.2px;font-weight:400;color:#222">8:00</div>
<svg class="ab" style="left:1157.80px;top:467.80px" width="12" height="11" viewBox="0 0 12 11"><rect x="1" y="1" width="7.8" height="8.8" fill="#f4f4f4"/><path d="M6.9,0.6 H1.3 Q0.6,0.6 0.6,1.3 V9.7 Q0.6,10.4 1.3,10.4 H8.9 Q9.6,10.4 9.6,9.7 V5.6" fill="none" stroke="#c6c6c6" stroke-width="1.1"/><path d="M3.6,8 L10.6,2.6" stroke="#c2c2c2" stroke-width="2.1"/><path d="M3.2,5.4 V7.6" stroke="#d6d6d6" stroke-width="1"/></svg>
<div class="t" style="left:638.70px;top:489.90px;font-size:10.2px;font-weight:400;color:#222">P 6:00-14:00/8</div>
<div class="t" style="left:760.80px;top:489.90px;font-size:10.2px;font-weight:400;color:#222">6:00-14:00</div>
<div class="t" style="left:902.60px;top:489.90px;width:46.60px;text-align:center;font-size:10.2px;font-weight:400;color:#222">8:00</div>
<svg class="ab" style="left:1157.80px;top:488.80px" width="12" height="11" viewBox="0 0 12 11"><rect x="1" y="1" width="7.8" height="8.8" fill="#f4f4f4"/><path d="M6.9,0.6 H1.3 Q0.6,0.6 0.6,1.3 V9.7 Q0.6,10.4 1.3,10.4 H8.9 Q9.6,10.4 9.6,9.7 V5.6" fill="none" stroke="#c6c6c6" stroke-width="1.1"/><path d="M3.6,8 L10.6,2.6" stroke="#c2c2c2" stroke-width="2.1"/><path d="M3.2,5.4 V7.6" stroke="#d6d6d6" stroke-width="1"/></svg>
<div class="t" style="left:638.70px;top:510.90px;font-size:10.2px;font-weight:400;color:#222">P 6:00-14:00/8</div>
<div class="t" style="left:760.80px;top:510.90px;font-size:10.2px;font-weight:400;color:#222">6:00-14:00</div>
<div class="t" style="left:902.60px;top:510.90px;width:46.60px;text-align:center;font-size:10.2px;font-weight:400;color:#222">8:00</div>
<svg class="ab" style="left:1157.80px;top:509.80px" width="12" height="11" viewBox="0 0 12 11"><rect x="1" y="1" width="7.8" height="8.8" fill="#f4f4f4"/><path d="M6.9,0.6 H1.3 Q0.6,0.6 0.6,1.3 V9.7 Q0.6,10.4 1.3,10.4 H8.9 Q9.6,10.4 9.6,9.7 V5.6" fill="none" stroke="#c6c6c6" stroke-width="1.1"/><path d="M3.6,8 L10.6,2.6" stroke="#c2c2c2" stroke-width="2.1"/><path d="M3.2,5.4 V7.6" stroke="#d6d6d6" stroke-width="1"/></svg>
<div class="t" style="left:638.70px;top:531.90px;font-size:10.2px;font-weight:400;color:#222">P 6:00-14:00/8</div>
<div class="t" style="left:760.80px;top:531.90px;font-size:10.2px;font-weight:400;color:#222">6:00-14:00</div>
<div class="t" style="left:902.60px;top:531.90px;width:46.60px;text-align:center;font-size:10.2px;font-weight:400;color:#222">8:00</div>
<svg class="ab" style="left:1157.80px;top:530.80px" width="12" height="11" viewBox="0 0 12 11"><rect x="1" y="1" width="7.8" height="8.8" fill="#f4f4f4"/><path d="M6.9,0.6 H1.3 Q0.6,0.6 0.6,1.3 V9.7 Q0.6,10.4 1.3,10.4 H8.9 Q9.6,10.4 9.6,9.7 V5.6" fill="none" stroke="#c6c6c6" stroke-width="1.1"/><path d="M3.6,8 L10.6,2.6" stroke="#c2c2c2" stroke-width="2.1"/><path d="M3.2,5.4 V7.6" stroke="#d6d6d6" stroke-width="1"/></svg>
<div class="t" style="left:638.70px;top:552.90px;font-size:10.2px;font-weight:400;color:#d6261f">S</div>
<svg class="ab" style="left:1157.80px;top:551.80px" width="12" height="11" viewBox="0 0 12 11"><rect x="1" y="1" width="7.8" height="8.8" fill="#f4f4f4"/><path d="M6.9,0.6 H1.3 Q0.6,0.6 0.6,1.3 V9.7 Q0.6,10.4 1.3,10.4 H8.9 Q9.6,10.4 9.6,9.7 V5.6" fill="none" stroke="#c6c6c6" stroke-width="1.1"/><path d="M3.6,8 L10.6,2.6" stroke="#c2c2c2" stroke-width="2.1"/><path d="M3.2,5.4 V7.6" stroke="#d6d6d6" stroke-width="1"/></svg>
<div class="t" style="left:638.70px;top:573.90px;font-size:10.2px;font-weight:400;color:#d6261f">N</div>
<svg class="ab" style="left:1157.80px;top:572.80px" width="12" height="11" viewBox="0 0 12 11"><rect x="1" y="1" width="7.8" height="8.8" fill="#f4f4f4"/><path d="M6.9,0.6 H1.3 Q0.6,0.6 0.6,1.3 V9.7 Q0.6,10.4 1.3,10.4 H8.9 Q9.6,10.4 9.6,9.7 V5.6" fill="none" stroke="#c6c6c6" stroke-width="1.1"/><path d="M3.6,8 L10.6,2.6" stroke="#c2c2c2" stroke-width="2.1"/><path d="M3.2,5.4 V7.6" stroke="#d6d6d6" stroke-width="1"/></svg>
<div class="t" style="left:638.70px;top:594.90px;font-size:10.2px;font-weight:400;color:#222">P 6:00-14:00/8</div>
<div class="t" style="left:760.80px;top:594.90px;font-size:10.2px;font-weight:400;color:#222">6:00-14:00</div>
<div class="t" style="left:902.60px;top:594.90px;width:46.60px;text-align:center;font-size:10.2px;font-weight:400;color:#222">8:00</div>
<svg class="ab" style="left:1157.80px;top:593.80px" width="12" height="11" viewBox="0 0 12 11"><rect x="1" y="1" width="7.8" height="8.8" fill="#f4f4f4"/><path d="M6.9,0.6 H1.3 Q0.6,0.6 0.6,1.3 V9.7 Q0.6,10.4 1.3,10.4 H8.9 Q9.6,10.4 9.6,9.7 V5.6" fill="none" stroke="#c6c6c6" stroke-width="1.1"/><path d="M3.6,8 L10.6,2.6" stroke="#c2c2c2" stroke-width="2.1"/><path d="M3.2,5.4 V7.6" stroke="#d6d6d6" stroke-width="1"/></svg>
<div class="t" style="left:638.70px;top:615.90px;font-size:10.2px;font-weight:400;color:#222">P 6:00-14:00/8</div>
<div class="t" style="left:760.80px;top:615.90px;font-size:10.2px;font-weight:400;color:#222">6:00-14:00</div>
<div class="t" style="left:902.60px;top:615.90px;width:46.60px;text-align:center;font-size:10.2px;font-weight:400;color:#222">8:00</div>
<svg class="ab" style="left:1157.80px;top:614.80px" width="12" height="11" viewBox="0 0 12 11"><rect x="1" y="1" width="7.8" height="8.8" fill="#f4f4f4"/><path d="M6.9,0.6 H1.3 Q0.6,0.6 0.6,1.3 V9.7 Q0.6,10.4 1.3,10.4 H8.9 Q9.6,10.4 9.6,9.7 V5.6" fill="none" stroke="#c6c6c6" stroke-width="1.1"/><path d="M3.6,8 L10.6,2.6" stroke="#c2c2c2" stroke-width="2.1"/><path d="M3.2,5.4 V7.6" stroke="#d6d6d6" stroke-width="1"/></svg>
<div class="t" style="left:638.70px;top:636.90px;font-size:10.2px;font-weight:400;color:#222">P 6:00-14:00/8</div>
<div class="t" style="left:760.80px;top:636.90px;font-size:10.2px;font-weight:400;color:#222">6:00-14:00</div>
<div class="t" style="left:902.60px;top:636.90px;width:46.60px;text-align:center;font-size:10.2px;font-weight:400;color:#222">8:00</div>
<svg class="ab" style="left:1157.80px;top:635.80px" width="12" height="11" viewBox="0 0 12 11"><rect x="1" y="1" width="7.8" height="8.8" fill="#f4f4f4"/><path d="M6.9,0.6 H1.3 Q0.6,0.6 0.6,1.3 V9.7 Q0.6,10.4 1.3,10.4 H8.9 Q9.6,10.4 9.6,9.7 V5.6" fill="none" stroke="#c6c6c6" stroke-width="1.1"/><path d="M3.6,8 L10.6,2.6" stroke="#c2c2c2" stroke-width="2.1"/><path d="M3.2,5.4 V7.6" stroke="#d6d6d6" stroke-width="1"/></svg>
<div class="t" style="left:638.70px;top:657.90px;font-size:10.2px;font-weight:400;color:#222">P 6:00-14:00/8</div>
<div class="t" style="left:760.80px;top:657.90px;font-size:10.2px;font-weight:400;color:#222">6:00-14:00</div>
<div class="t" style="left:902.60px;top:657.90px;width:46.60px;text-align:center;font-size:10.2px;font-weight:400;color:#222">8:00</div>
<svg class="ab" style="left:1157.80px;top:656.80px" width="12" height="11" viewBox="0 0 12 11"><rect x="1" y="1" width="7.8" height="8.8" fill="#f4f4f4"/><path d="M6.9,0.6 H1.3 Q0.6,0.6 0.6,1.3 V9.7 Q0.6,10.4 1.3,10.4 H8.9 Q9.6,10.4 9.6,9.7 V5.6" fill="none" stroke="#c6c6c6" stroke-width="1.1"/><path d="M3.6,8 L10.6,2.6" stroke="#c2c2c2" stroke-width="2.1"/><path d="M3.2,5.4 V7.6" stroke="#d6d6d6" stroke-width="1"/></svg>
<div class="t" style="left:638.70px;top:678.90px;font-size:10.2px;font-weight:400;color:#222">P 6:00-14:00/8</div>
<div class="t" style="left:760.80px;top:678.90px;font-size:10.2px;font-weight:400;color:#222">6:00-14:00</div>
<div class="t" style="left:902.60px;top:678.90px;width:46.60px;text-align:center;font-size:10.2px;font-weight:400;color:#222">8:00</div>
<svg class="ab" style="left:1157.80px;top:677.80px" width="12" height="11" viewBox="0 0 12 11"><rect x="1" y="1" width="7.8" height="8.8" fill="#f4f4f4"/><path d="M6.9,0.6 H1.3 Q0.6,0.6 0.6,1.3 V9.7 Q0.6,10.4 1.3,10.4 H8.9 Q9.6,10.4 9.6,9.7 V5.6" fill="none" stroke="#c6c6c6" stroke-width="1.1"/><path d="M3.6,8 L10.6,2.6" stroke="#c2c2c2" stroke-width="2.1"/><path d="M3.2,5.4 V7.6" stroke="#d6d6d6" stroke-width="1"/></svg>
<div class="t" style="left:638.70px;top:699.90px;font-size:10.2px;font-weight:400;color:#d6261f">S</div>
<svg class="ab" style="left:1157.80px;top:698.80px" width="12" height="11" viewBox="0 0 12 11"><rect x="1" y="1" width="7.8" height="8.8" fill="#f4f4f4"/><path d="M6.9,0.6 H1.3 Q0.6,0.6 0.6,1.3 V9.7 Q0.6,10.4 1.3,10.4 H8.9 Q9.6,10.4 9.6,9.7 V5.6" fill="none" stroke="#c6c6c6" stroke-width="1.1"/><path d="M3.6,8 L10.6,2.6" stroke="#c2c2c2" stroke-width="2.1"/><path d="M3.2,5.4 V7.6" stroke="#d6d6d6" stroke-width="1"/></svg>
<div class="t" style="left:638.70px;top:720.90px;font-size:10.2px;font-weight:400;color:#d6261f">N</div>
<svg class="ab" style="left:1157.80px;top:719.80px" width="12" height="11" viewBox="0 0 12 11"><rect x="1" y="1" width="7.8" height="8.8" fill="#f4f4f4"/><path d="M6.9,0.6 H1.3 Q0.6,0.6 0.6,1.3 V9.7 Q0.6,10.4 1.3,10.4 H8.9 Q9.6,10.4 9.6,9.7 V5.6" fill="none" stroke="#c6c6c6" stroke-width="1.1"/><path d="M3.6,8 L10.6,2.6" stroke="#c2c2c2" stroke-width="2.1"/><path d="M3.2,5.4 V7.6" stroke="#d6d6d6" stroke-width="1"/></svg>
<div class="t" style="left:638.70px;top:741.90px;font-size:10.2px;font-weight:400;color:#222">P 6:00-14:00/8</div>
<div class="t" style="left:760.80px;top:741.90px;font-size:10.2px;font-weight:400;color:#222">6:00-14:00</div>
<div class="t" style="left:902.60px;top:741.90px;width:46.60px;text-align:center;font-size:10.2px;font-weight:400;color:#222">8:00</div>
<svg class="ab" style="left:1157.80px;top:740.80px" width="12" height="11" viewBox="0 0 12 11"><rect x="1" y="1" width="7.8" height="8.8" fill="#f4f4f4"/><path d="M6.9,0.6 H1.3 Q0.6,0.6 0.6,1.3 V9.7 Q0.6,10.4 1.3,10.4 H8.9 Q9.6,10.4 9.6,9.7 V5.6" fill="none" stroke="#c6c6c6" stroke-width="1.1"/><path d="M3.6,8 L10.6,2.6" stroke="#c2c2c2" stroke-width="2.1"/><path d="M3.2,5.4 V7.6" stroke="#d6d6d6" stroke-width="1"/></svg>
<div class="t" style="left:638.70px;top:762.90px;font-size:10.2px;font-weight:400;color:#222">P 6:00-14:00/8</div>
<div class="t" style="left:760.80px;top:762.90px;font-size:10.2px;font-weight:400;color:#222">6:00-14:00</div>
<div class="t" style="left:902.60px;top:762.90px;width:46.60px;text-align:center;font-size:10.2px;font-weight:400;color:#222">8:00</div>
<svg class="ab" style="left:1157.80px;top:761.80px" width="12" height="11" viewBox="0 0 12 11"><rect x="1" y="1" width="7.8" height="8.8" fill="#f4f4f4"/><path d="M6.9,0.6 H1.3 Q0.6,0.6 0.6,1.3 V9.7 Q0.6,10.4 1.3,10.4 H8.9 Q9.6,10.4 9.6,9.7 V5.6" fill="none" stroke="#c6c6c6" stroke-width="1.1"/><path d="M3.6,8 L10.6,2.6" stroke="#c2c2c2" stroke-width="2.1"/><path d="M3.2,5.4 V7.6" stroke="#d6d6d6" stroke-width="1"/></svg>
<div class="t" style="left:638.70px;top:783.90px;font-size:10.2px;font-weight:400;color:#222">P 6:00-14:00/8</div>
<div class="t" style="left:760.80px;top:783.90px;font-size:10.2px;font-weight:400;color:#222">6:00-14:00</div>
<div class="t" style="left:902.60px;top:783.90px;width:46.60px;text-align:center;font-size:10.2px;font-weight:400;color:#222">8:00</div>
<svg class="ab" style="left:1157.80px;top:782.80px" width="12" height="11" viewBox="0 0 12 11"><rect x="1" y="1" width="7.8" height="8.8" fill="#f4f4f4"/><path d="M6.9,0.6 H1.3 Q0.6,0.6 0.6,1.3 V9.7 Q0.6,10.4 1.3,10.4 H8.9 Q9.6,10.4 9.6,9.7 V5.6" fill="none" stroke="#c6c6c6" stroke-width="1.1"/><path d="M3.6,8 L10.6,2.6" stroke="#c2c2c2" stroke-width="2.1"/><path d="M3.2,5.4 V7.6" stroke="#d6d6d6" stroke-width="1"/></svg>
<div class="t" style="left:638.70px;top:804.90px;font-size:10.2px;font-weight:400;color:#222">P 6:00-14:00/8</div>
<div class="t" style="left:760.80px;top:804.90px;font-size:10.2px;font-weight:400;color:#222">6:00-14:00</div>
<div class="t" style="left:902.60px;top:804.90px;width:46.60px;text-align:center;font-size:10.2px;font-weight:400;color:#222">8:00</div>
<svg class="ab" style="left:1157.80px;top:803.80px" width="12" height="11" viewBox="0 0 12 11"><rect x="1" y="1" width="7.8" height="8.8" fill="#f4f4f4"/><path d="M6.9,0.6 H1.3 Q0.6,0.6 0.6,1.3 V9.7 Q0.6,10.4 1.3,10.4 H8.9 Q9.6,10.4 9.6,9.7 V5.6" fill="none" stroke="#c6c6c6" stroke-width="1.1"/><path d="M3.6,8 L10.6,2.6" stroke="#c2c2c2" stroke-width="2.1"/><path d="M3.2,5.4 V7.6" stroke="#d6d6d6" stroke-width="1"/></svg>
<div class="t" style="left:638.70px;top:825.90px;font-size:10.2px;font-weight:400;color:#222">P 6:00-14:00/8</div>
<div class="t" style="left:760.80px;top:825.90px;font-size:10.2px;font-weight:400;color:#222">6:00-14:00</div>
<div class="t" style="left:902.60px;top:825.90px;width:46.60px;text-align:center;font-size:10.2px;font-weight:400;color:#222">8:00</div>
<svg class="ab" style="left:1157.80px;top:824.80px" width="12" height="11" viewBox="0 0 12 11"><rect x="1" y="1" width="7.8" height="8.8" fill="#f4f4f4"/><path d="M6.9,0.6 H1.3 Q0.6,0.6 0.6,1.3 V9.7 Q0.6,10.4 1.3,10.4 H8.9 Q9.6,10.4 9.6,9.7 V5.6" fill="none" stroke="#c6c6c6" stroke-width="1.1"/><path d="M3.6,8 L10.6,2.6" stroke="#c2c2c2" stroke-width="2.1"/><path d="M3.2,5.4 V7.6" stroke="#d6d6d6" stroke-width="1"/></svg>
<div class="ab" style="left:630px;top:840.50px;width:557px;height:2px;background:#e0e0e0"></div>
<div class="t" style="left:638.7px;top:847.50px;font-size:9.45px;color:#333">Norma miesięczna</div>
<div class="t" style="left:999.5px;top:847.50px;width:60px;text-align:center;font-size:9.45px;color:#333">92:00</div>
<div class="t" style="left:638.7px;top:866.60px;font-size:9.45px;color:#333">Dni pracy</div>
<div class="t" style="left:999.5px;top:866.60px;width:60px;text-align:center;font-size:9.45px;color:#333">23</div>
<div class="t" style="left:638.7px;top:885.70px;font-size:9.45px;color:#333">Liczba sobót</div>
<div class="t" style="left:999.5px;top:885.70px;width:60px;text-align:center;font-size:9.45px;color:#333">4</div>
<div class="t" style="left:638.7px;top:904.80px;font-size:9.45px;color:#333">Niedziele i święta</div>
<div class="t" style="left:999.5px;top:904.80px;width:60px;text-align:center;font-size:9.45px;color:#333">4</div>
<div class="ab" style="left:1188px;top:124px;width:557px;height:45px;background:#f5f5f5"></div>
<div class="ab" style="left:1193.8px;top:147px;width:510.2px;height:18px;border-radius:3px;background:#e5d92b"></div>
<div class="t" style="left:1193.8px;top:151.5px;width:510.2px;text-align:center;font-size:9.3px;font-weight:700;color:#222">W trakcie wprowadzania</div>
<svg class="ab" style="left:1712px;top:137px" width="19" height="18" viewBox="0 0 19 18"><path d="M15.27,6.74 L17.47,7.58 L17.47,10.42 L15.27,11.26 L15.18,11.48 L16.15,13.63 L14.13,15.65 L11.98,14.68 L11.76,14.77 L10.92,16.97 L8.08,16.97 L7.24,14.77 L7.02,14.68 L4.87,15.65 L2.85,13.63 L3.82,11.48 L3.73,11.26 L1.53,10.42 L1.53,7.58 L3.73,6.74 L3.82,6.52 L2.85,4.37 L4.87,2.35 L7.02,3.32 L7.24,3.23 L8.08,1.03 L10.92,1.03 L11.76,3.23 L11.98,3.32 L14.13,2.35 L16.15,4.37 L15.18,6.52 Z" fill="none" stroke="#444" stroke-width="1.1" stroke-linejoin="round"/><circle cx="9.5" cy="9" r="3.3" fill="none" stroke="#444" stroke-width="1.1"/></svg>
<svg class="ab" style="left:1407px;top:131px" width="15" height="12" viewBox="0 0 15 12"><path d="M1,6.2 L5.2,10.4 L14,1.4" fill="none" stroke="#1f9b2a" stroke-width="2.2"/></svg>
<div class="t" style="left:1428.8px;top:130.7px;font-size:12.3px;font-weight:400;-webkit-text-stroke:0.3px #1e2430;color:#1e2430"><span style="display:inline-block;transform-origin:0 0;transform:scaleX(0.9280)">Kot Jan</span></div>
<div class="ab" style="left:1474.1px;top:129.2px;width:15px;height:14.8px;border-radius:2.5px;background:#666"></div><div class="t" style="left:1474.1px;top:130.6px;width:15px;text-align:center;font-size:12.6px;font-weight:700;color:#fff">R</div>
<div class="ab" style="left:1188px;top:167.8px;width:557px;height:22.7px;background:#f8f8f8;border-top:1px solid #e6e6e6;border-bottom:1px solid #e2e2e2"></div>
<div class="t" style="left:1196.70px;top:173.6px;font-size:11px;color:#333"><span style="display:inline-block;transform:scaleX(0.89);transform-origin:0 0">Plan</span></div>
<div class="ab" style="left:1308.00px;top:169px;width:1px;height:21px;background:#e6e6e6"></div>
<div class="t" style="left:1308.50px;top:173.6px;width:79.20px;text-align:center;font-size:11px;color:#333"><span style="display:inline-block;transform:scaleX(0.9);transform-origin:50% 0">Czas pracy</span></div>
<div class="ab" style="left:1387.20px;top:169px;width:1px;height:21px;background:#e6e6e6"></div>
<div class="t" style="left:1387.70px;top:173.6px;width:72.90px;text-align:center;font-size:11px;color:#333"><span style="display:inline-block;transform:scaleX(0.9);transform-origin:50% 0">Absencja</span></div>
<div class="ab" style="left:1460.10px;top:169px;width:1px;height:21px;background:#e6e6e6"></div>
<div class="t" style="left:1460.60px;top:173.6px;width:46.60px;text-align:center;font-size:11px;color:#333"><span style="display:inline-block;transform:scaleX(0.9);transform-origin:50% 0">Godz.</span></div>
<div class="ab" style="left:1506.70px;top:169px;width:1px;height:21px;background:#e6e6e6"></div>
<div class="t" style="left:1507.20px;top:173.6px;width:49.40px;text-align:center;font-size:11px;color:#333"><span style="display:inline-block;transform:scaleX(0.9);transform-origin:50% 0">G. nocne</span></div>
<div class="ab" style="left:1556.10px;top:169px;width:1px;height:21px;background:#e6e6e6"></div>
<div class="t" style="left:1556.60px;top:173.6px;width:50.90px;text-align:center;font-size:11px;color:#333"><span style="display:inline-block;transform:scaleX(0.9);transform-origin:50% 0">N50</span></div>
<div class="ab" style="left:1607.00px;top:169px;width:1px;height:21px;background:#e6e6e6"></div>
<div class="t" style="left:1607.50px;top:173.6px;width:51.30px;text-align:center;font-size:11px;color:#333"><span style="display:inline-block;transform:scaleX(0.9);transform-origin:50% 0">N100</span></div>
<div class="ab" style="left:1658.30px;top:169px;width:1px;height:21px;background:#e6e6e6"></div>
<div class="t" style="left:1658.80px;top:173.6px;width:51.50px;text-align:center;font-size:11px;color:#333"><span style="display:inline-block;transform:scaleX(0.9);transform-origin:50% 0">N tyg.</span></div>
<div class="ab" style="left:1709.80px;top:169px;width:1px;height:21px;background:#e6e6e6"></div>
<div class="t" style="left:1710.30px;top:173.6px;width:34.70px;text-align:center;font-size:11px;color:#333"><span style="display:inline-block;transform:scaleX(0.9);transform-origin:50% 0">Uwagi</span></div>
<div class="ab" style="left:1188px;top:190px;width:557px;height:655.84px;background:#fff"></div>
<div class="ab" style="left:1188.00px;top:190px;width:120.50px;height:655.84px;background:#f3f3f3"></div>
<div class="ab" style="left:1460.60px;top:190px;width:46.60px;height:655.84px;background:#f3f3f3"></div>
<div class="ab" style="left:1507.20px;top:190px;width:49.40px;height:655.84px;background:#f3f3f3"></div>
<div class="ab" style="left:1188px;top:273.50px;width:557px;height:21.00px;background:#fde7e7"></div>
<div class="ab" style="left:1188px;top:421.52px;width:557px;height:21.25px;background:#fde7e7"></div>
<div class="ab" style="left:1188px;top:570.30px;width:557px;height:21.25px;background:#fde7e7"></div>
<div class="ab" style="left:1188px;top:719.09px;width:557px;height:21.25px;background:#fde7e7"></div>
<div class="ab" style="left:1188px;top:209.90px;width:557px;height:1px;background:rgba(0,0,0,0.085)"></div>
<div class="ab" style="left:1188px;top:230.90px;width:557px;height:1px;background:rgba(0,0,0,0.085)"></div>
<div class="ab" style="left:1188px;top:251.90px;width:557px;height:1px;background:rgba(0,0,0,0.085)"></div>
<div class="ab" style="left:1188px;top:272.90px;width:557px;height:1px;background:rgba(0,0,0,0.085)"></div>
<div class="ab" style="left:1188px;top:293.90px;width:557px;height:1px;background:rgba(0,0,0,0.085)"></div>
<div class="ab" style="left:1188px;top:314.90px;width:557px;height:1px;background:rgba(0,0,0,0.085)"></div>
<div class="ab" style="left:1188px;top:335.90px;width:557px;height:1px;background:rgba(0,0,0,0.085)"></div>
<div class="ab" style="left:1188px;top:357.15px;width:557px;height:1px;background:rgba(0,0,0,0.085)"></div>
<div class="ab" style="left:1188px;top:378.41px;width:557px;height:1px;background:rgba(0,0,0,0.085)"></div>
<div class="ab" style="left:1188px;top:399.66px;width:557px;height:1px;background:rgba(0,0,0,0.085)"></div>
<div class="ab" style="left:1188px;top:420.92px;width:557px;height:1px;background:rgba(0,0,0,0.085)"></div>
<div class="ab" style="left:1188px;top:442.17px;width:557px;height:1px;background:rgba(0,0,0,0.085)"></div>
<div class="ab" style="left:1188px;top:463.43px;width:557px;height:1px;background:rgba(0,0,0,0.085)"></div>
<div class="ab" style="left:1188px;top:484.68px;width:557px;height:1px;background:rgba(0,0,0,0.085)"></div>
<div class="ab" style="left:1188px;top:505.94px;width:557px;height:1px;background:rgba(0,0,0,0.085)"></div>
<div class="ab" style="left:1188px;top:527.19px;width:557px;height:1px;background:rgba(0,0,0,0.085)"></div>
<div class="ab" style="left:1188px;top:548.45px;width:557px;height:1px;background:rgba(0,0,0,0.085)"></div>
<div class="ab" style="left:1188px;top:569.70px;width:557px;height:1px;background:rgba(0,0,0,0.085)"></div>
<div class="ab" style="left:1188px;top:590.96px;width:557px;height:1px;background:rgba(0,0,0,0.085)"></div>
<div class="ab" style="left:1188px;top:612.21px;width:557px;height:1px;background:rgba(0,0,0,0.085)"></div>
<div class="ab" style="left:1188px;top:633.47px;width:557px;height:1px;background:rgba(0,0,0,0.085)"></div>
<div class="ab" style="left:1188px;top:654.72px;width:557px;height:1px;background:rgba(0,0,0,0.085)"></div>
<div class="ab" style="left:1188px;top:675.98px;width:557px;height:1px;background:rgba(0,0,0,0.085)"></div>
<div class="ab" style="left:1188px;top:697.23px;width:557px;height:1px;background:rgba(0,0,0,0.085)"></div>
<div class="ab" style="left:1188px;top:718.49px;width:557px;height:1px;background:rgba(0,0,0,0.085)"></div>
<div class="ab" style="left:1188px;top:739.74px;width:557px;height:1px;background:rgba(0,0,0,0.085)"></div>
<div class="ab" style="left:1188px;top:760.74px;width:557px;height:1px;background:rgba(0,0,0,0.085)"></div>
<div class="ab" style="left:1188px;top:781.74px;width:557px;height:1px;background:rgba(0,0,0,0.085)"></div>
<div class="ab" style="left:1188px;top:802.74px;width:557px;height:1px;background:rgba(0,0,0,0.085)"></div>
<div class="ab" style="left:1188px;top:823.74px;width:557px;height:1px;background:rgba(0,0,0,0.085)"></div>
<div class="ab" style="left:1188px;top:844.74px;width:557px;height:1px;background:rgba(0,0,0,0.085)"></div>
<div class="ab" style="left:1308.50px;top:190px;width:1px;height:655.84px;background:rgba(0,0,0,0.068)"></div>
<div class="ab" style="left:1387.70px;top:190px;width:1px;height:655.84px;background:rgba(0,0,0,0.068)"></div>
<div class="ab" style="left:1460.60px;top:190px;width:1px;height:655.84px;background:rgba(0,0,0,0.068)"></div>
<div class="ab" style="left:1507.20px;top:190px;width:1px;height:655.84px;background:rgba(0,0,0,0.068)"></div>
<div class="ab" style="left:1556.60px;top:190px;width:1px;height:655.84px;background:rgba(0,0,0,0.068)"></div>
<div class="ab" style="left:1607.50px;top:190px;width:1px;height:655.84px;background:rgba(0,0,0,0.068)"></div>
<div class="ab" style="left:1658.80px;top:190px;width:1px;height:655.84px;background:rgba(0,0,0,0.068)"></div>
<div class="ab" style="left:1710.30px;top:190px;width:1px;height:655.84px;background:rgba(0,0,0,0.068)"></div>
<div class="t" style="left:1196.70px;top:195.90px;font-size:10.2px;font-weight:400;color:#222">P 6:00-14:00/8</div>
<div class="t" style="left:1318.80px;top:195.90px;font-size:10.2px;font-weight:400;color:#222">6:00-14:00</div>
<div class="t" style="left:1460.60px;top:195.90px;width:46.60px;text-align:center;font-size:10.2px;font-weight:400;color:#222">8:00</div>
<svg class="ab" style="left:1715.80px;top:194.80px" width="12" height="11" viewBox="0 0 12 11"><rect x="1" y="1" width="7.8" height="8.8" fill="#f4f4f4"/><path d="M6.9,0.6 H1.3 Q0.6,0.6 0.6,1.3 V9.7 Q0.6,10.4 1.3,10.4 H8.9 Q9.6,10.4 9.6,9.7 V5.6" fill="none" stroke="#c6c6c6" stroke-width="1.1"/><path d="M3.6,8 L10.6,2.6" stroke="#c2c2c2" stroke-width="2.1"/><path d="M3.2,5.4 V7.6" stroke="#d6d6d6" stroke-width="1"/></svg>
<div class="t" style="left:1196.70px;top:216.90px;font-size:10.2px;font-weight:400;color:#222">P 6:00-14:00/8</div>
<div class="t" style="left:1318.80px;top:216.90px;font-size:10.2px;font-weight:400;color:#222">6:00-14:00</div>
<div class="t" style="left:1460.60px;top:216.90px;width:46.60px;text-align:center;font-size:10.2px;font-weight:400;color:#222">8:00</div>
<svg class="ab" style="left:1715.80px;top:215.80px" width="12" height="11" viewBox="0 0 12 11"><rect x="1" y="1" width="7.8" height="8.8" fill="#f4f4f4"/><path d="M6.9,0.6 H1.3 Q0.6,0.6 0.6,1.3 V9.7 Q0.6,10.4 1.3,10.4 H8.9 Q9.6,10.4 9.6,9.7 V5.6" fill="none" stroke="#c6c6c6" stroke-width="1.1"/><path d="M3.6,8 L10.6,2.6" stroke="#c2c2c2" stroke-width="2.1"/><path d="M3.2,5.4 V7.6" stroke="#d6d6d6" stroke-width="1"/></svg>
<div class="t" style="left:1196.70px;top:237.90px;font-size:10.2px;font-weight:400;color:#222">P 6:00-14:00/8</div>
<div class="t" style="left:1318.80px;top:237.90px;font-size:10.2px;font-weight:400;color:#222">6:00-14:00</div>
<div class="t" style="left:1460.60px;top:237.90px;width:46.60px;text-align:center;font-size:10.2px;font-weight:400;color:#222">8:00</div>
<svg class="ab" style="left:1715.80px;top:236.80px" width="12" height="11" viewBox="0 0 12 11"><rect x="1" y="1" width="7.8" height="8.8" fill="#f4f4f4"/><path d="M6.9,0.6 H1.3 Q0.6,0.6 0.6,1.3 V9.7 Q0.6,10.4 1.3,10.4 H8.9 Q9.6,10.4 9.6,9.7 V5.6" fill="none" stroke="#c6c6c6" stroke-width="1.1"/><path d="M3.6,8 L10.6,2.6" stroke="#c2c2c2" stroke-width="2.1"/><path d="M3.2,5.4 V7.6" stroke="#d6d6d6" stroke-width="1"/></svg>
<div class="t" style="left:1196.70px;top:258.90px;font-size:10.2px;font-weight:400;color:#d6261f">S</div>
<svg class="ab" style="left:1715.80px;top:257.80px" width="12" height="11" viewBox="0 0 12 11"><rect x="1" y="1" width="7.8" height="8.8" fill="#f4f4f4"/><path d="M6.9,0.6 H1.3 Q0.6,0.6 0.6,1.3 V9.7 Q0.6,10.4 1.3,10.4 H8.9 Q9.6,10.4 9.6,9.7 V5.6" fill="none" stroke="#c6c6c6" stroke-width="1.1"/><path d="M3.6,8 L10.6,2.6" stroke="#c2c2c2" stroke-width="2.1"/><path d="M3.2,5.4 V7.6" stroke="#d6d6d6" stroke-width="1"/></svg>
<div class="t" style="left:1196.70px;top:279.90px;font-size:10.2px;font-weight:700;color:#d6261f">N</div>
<div class="t" style="left:1318.80px;top:279.90px;font-size:10.2px;font-weight:700;color:#222;letter-spacing:0.4px">6:00-8:00</div>
<div class="t" style="left:1669.10px;top:279.90px;font-size:10.2px;font-weight:700;color:#222;letter-spacing:0.4px">2:00</div>
<svg class="ab" style="left:1715.80px;top:278.80px" width="12" height="11" viewBox="0 0 12 11"><rect x="1" y="1" width="7.8" height="8.8" fill="#f4f4f4"/><path d="M6.9,0.6 H1.3 Q0.6,0.6 0.6,1.3 V9.7 Q0.6,10.4 1.3,10.4 H8.9 Q9.6,10.4 9.6,9.7 V5.6" fill="none" stroke="#c6c6c6" stroke-width="1.1"/><path d="M3.6,8 L10.6,2.6" stroke="#c2c2c2" stroke-width="2.1"/><path d="M3.2,5.4 V7.6" stroke="#d6d6d6" stroke-width="1"/></svg>
<div class="t" style="left:1196.70px;top:300.90px;font-size:10.2px;font-weight:400;color:#222">P 6:00-14:00/8</div>
<div class="t" style="left:1318.80px;top:300.90px;font-size:10.2px;font-weight:400;color:#222">6:00-14:00</div>
<div class="t" style="left:1460.60px;top:300.90px;width:46.60px;text-align:center;font-size:10.2px;font-weight:400;color:#222">8:00</div>
<svg class="ab" style="left:1715.80px;top:299.80px" width="12" height="11" viewBox="0 0 12 11"><rect x="1" y="1" width="7.8" height="8.8" fill="#f4f4f4"/><path d="M6.9,0.6 H1.3 Q0.6,0.6 0.6,1.3 V9.7 Q0.6,10.4 1.3,10.4 H8.9 Q9.6,10.4 9.6,9.7 V5.6" fill="none" stroke="#c6c6c6" stroke-width="1.1"/><path d="M3.6,8 L10.6,2.6" stroke="#c2c2c2" stroke-width="2.1"/><path d="M3.2,5.4 V7.6" stroke="#d6d6d6" stroke-width="1"/></svg>
<div class="t" style="left:1196.70px;top:321.90px;font-size:10.2px;font-weight:400;color:#222">P 6:00-14:00/8</div>
<div class="t" style="left:1318.80px;top:321.90px;font-size:10.2px;font-weight:400;color:#222">6:00-14:00</div>
<div class="t" style="left:1460.60px;top:321.90px;width:46.60px;text-align:center;font-size:10.2px;font-weight:400;color:#222">8:00</div>
<svg class="ab" style="left:1715.80px;top:320.80px" width="12" height="11" viewBox="0 0 12 11"><rect x="1" y="1" width="7.8" height="8.8" fill="#f4f4f4"/><path d="M6.9,0.6 H1.3 Q0.6,0.6 0.6,1.3 V9.7 Q0.6,10.4 1.3,10.4 H8.9 Q9.6,10.4 9.6,9.7 V5.6" fill="none" stroke="#c6c6c6" stroke-width="1.1"/><path d="M3.6,8 L10.6,2.6" stroke="#c2c2c2" stroke-width="2.1"/><path d="M3.2,5.4 V7.6" stroke="#d6d6d6" stroke-width="1"/></svg>
<div class="t" style="left:1196.70px;top:342.90px;font-size:10.2px;font-weight:700;color:#222;letter-spacing:0.4px">P 6:00-14:00/8</div>
<div class="t" style="left:1387.70px;top:342.90px;width:72.90px;text-align:center;font-size:10.2px;font-weight:700;color:#1e8a1e">U</div>
<svg class="ab" style="left:1715.80px;top:341.80px" width="12" height="11" viewBox="0 0 12 11"><rect x="1" y="1" width="7.8" height="8.8" fill="#f4f4f4"/><path d="M6.9,0.6 H1.3 Q0.6,0.6 0.6,1.3 V9.7 Q0.6,10.4 1.3,10.4 H8.9 Q9.6,10.4 9.6,9.7 V5.6" fill="none" stroke="#c6c6c6" stroke-width="1.1"/><path d="M3.6,8 L10.6,2.6" stroke="#c2c2c2" stroke-width="2.1"/><path d="M3.2,5.4 V7.6" stroke="#d6d6d6" stroke-width="1"/></svg>
<div class="t" style="left:1196.70px;top:364.15px;font-size:10.2px;font-weight:700;color:#222;letter-spacing:0.4px">P 6:00-14:00/8</div>
<div class="t" style="left:1387.70px;top:364.15px;width:72.90px;text-align:center;font-size:10.2px;font-weight:700;color:#1e8a1e">U</div>
<svg class="ab" style="left:1715.80px;top:363.06px" width="12" height="11" viewBox="0 0 12 11"><rect x="1" y="1" width="7.8" height="8.8" fill="#f4f4f4"/><path d="M6.9,0.6 H1.3 Q0.6,0.6 0.6,1.3 V9.7 Q0.6,10.4 1.3,10.4 H8.9 Q9.6,10.4 9.6,9.7 V5.6" fill="none" stroke="#c6c6c6" stroke-width="1.1"/><path d="M3.6,8 L10.6,2.6" stroke="#c2c2c2" stroke-width="2.1"/><path d="M3.2,5.4 V7.6" stroke="#d6d6d6" stroke-width="1"/></svg>
<div class="t" style="left:1196.70px;top:385.41px;font-size:10.2px;font-weight:700;color:#222;letter-spacing:0.4px">P 6:00-14:00/8</div>
<div class="t" style="left:1387.70px;top:385.41px;width:72.90px;text-align:center;font-size:10.2px;font-weight:700;color:#1e8a1e">U</div>
<svg class="ab" style="left:1715.80px;top:384.31px" width="12" height="11" viewBox="0 0 12 11"><rect x="1" y="1" width="7.8" height="8.8" fill="#f4f4f4"/><path d="M6.9,0.6 H1.3 Q0.6,0.6 0.6,1.3 V9.7 Q0.6,10.4 1.3,10.4 H8.9 Q9.6,10.4 9.6,9.7 V5.6" fill="none" stroke="#c6c6c6" stroke-width="1.1"/><path d="M3.6,8 L10.6,2.6" stroke="#c2c2c2" stroke-width="2.1"/><path d="M3.2,5.4 V7.6" stroke="#d6d6d6" stroke-width="1"/></svg>
<div class="t" style="left:1196.70px;top:406.66px;font-size:10.2px;font-weight:400;color:#d6261f">S</div>
<div class="t" style="left:1387.70px;top:406.66px;width:72.90px;text-align:center;font-size:10.2px;font-weight:400;color:#1e8a1e">U</div>
<svg class="ab" style="left:1715.80px;top:405.56px" width="12" height="11" viewBox="0 0 12 11"><rect x="1" y="1" width="7.8" height="8.8" fill="#f4f4f4"/><path d="M6.9,0.6 H1.3 Q0.6,0.6 0.6,1.3 V9.7 Q0.6,10.4 1.3,10.4 H8.9 Q9.6,10.4 9.6,9.7 V5.6" fill="none" stroke="#c6c6c6" stroke-width="1.1"/><path d="M3.6,8 L10.6,2.6" stroke="#c2c2c2" stroke-width="2.1"/><path d="M3.2,5.4 V7.6" stroke="#d6d6d6" stroke-width="1"/></svg>
<div class="t" style="left:1196.70px;top:427.92px;font-size:10.2px;font-weight:400;color:#d6261f">N</div>
<div class="t" style="left:1387.70px;top:427.92px;width:72.90px;text-align:center;font-size:10.2px;font-weight:400;color:#1e8a1e">U</div>
<svg class="ab" style="left:1715.80px;top:426.82px" width="12" height="11" viewBox="0 0 12 11"><rect x="1" y="1" width="7.8" height="8.8" fill="#f4f4f4"/><path d="M6.9,0.6 H1.3 Q0.6,0.6 0.6,1.3 V9.7 Q0.6,10.4 1.3,10.4 H8.9 Q9.6,10.4 9.6,9.7 V5.6" fill="none" stroke="#c6c6c6" stroke-width="1.1"/><path d="M3.6,8 L10.6,2.6" stroke="#c2c2c2" stroke-width="2.1"/><path d="M3.2,5.4 V7.6" stroke="#d6d6d6" stroke-width="1"/></svg>
<div class="t" style="left:1196.70px;top:449.17px;font-size:10.2px;font-weight:700;color:#222;letter-spacing:0.4px">P 6:00-14:00/8</div>
<div class="t" style="left:1387.70px;top:449.17px;width:72.90px;text-align:center;font-size:10.2px;font-weight:700;color:#1e8a1e">U</div>
<svg class="ab" style="left:1715.80px;top:448.07px" width="12" height="11" viewBox="0 0 12 11"><rect x="1" y="1" width="7.8" height="8.8" fill="#f4f4f4"/><path d="M6.9,0.6 H1.3 Q0.6,0.6 0.6,1.3 V9.7 Q0.6,10.4 1.3,10.4 H8.9 Q9.6,10.4 9.6,9.7 V5.6" fill="none" stroke="#c6c6c6" stroke-width="1.1"/><path d="M3.6,8 L10.6,2.6" stroke="#c2c2c2" stroke-width="2.1"/><path d="M3.2,5.4 V7.6" stroke="#d6d6d6" stroke-width="1"/></svg>
<div class="t" style="left:1196.70px;top:470.43px;font-size:10.2px;font-weight:700;color:#222;letter-spacing:0.4px">P 6:00-14:00/8</div>
<div class="t" style="left:1387.70px;top:470.43px;width:72.90px;text-align:center;font-size:10.2px;font-weight:700;color:#1e8a1e">U</div>
<svg class="ab" style="left:1715.80px;top:469.33px" width="12" height="11" viewBox="0 0 12 11"><rect x="1" y="1" width="7.8" height="8.8" fill="#f4f4f4"/><path d="M6.9,0.6 H1.3 Q0.6,0.6 0.6,1.3 V9.7 Q0.6,10.4 1.3,10.4 H8.9 Q9.6,10.4 9.6,9.7 V5.6" fill="none" stroke="#c6c6c6" stroke-width="1.1"/><path d="M3.6,8 L10.6,2.6" stroke="#c2c2c2" stroke-width="2.1"/><path d="M3.2,5.4 V7.6" stroke="#d6d6d6" stroke-width="1"/></svg>
<div class="t" style="left:1196.70px;top:491.68px;font-size:10.2px;font-weight:400;color:#222">P 6:00-14:00/8</div>
<div class="t" style="left:1387.70px;top:491.68px;width:72.90px;text-align:center;font-size:10.2px;font-weight:400;color:#1e8a1e">U</div>
<svg class="ab" style="left:1715.80px;top:490.58px" width="12" height="11" viewBox="0 0 12 11"><rect x="1" y="1" width="7.8" height="8.8" fill="#f4f4f4"/><path d="M6.9,0.6 H1.3 Q0.6,0.6 0.6,1.3 V9.7 Q0.6,10.4 1.3,10.4 H8.9 Q9.6,10.4 9.6,9.7 V5.6" fill="none" stroke="#c6c6c6" stroke-width="1.1"/><path d="M3.6,8 L10.6,2.6" stroke="#c2c2c2" stroke-width="2.1"/><path d="M3.2,5.4 V7.6" stroke="#d6d6d6" stroke-width="1"/></svg>
<div class="t" style="left:1196.70px;top:512.94px;font-size:10.2px;font-weight:700;color:#222;letter-spacing:0.4px">P 6:00-14:00/8</div>
<div class="t" style="left:1387.70px;top:512.94px;width:72.90px;text-align:center;font-size:10.2px;font-weight:700;color:#1e8a1e">U</div>
<svg class="ab" style="left:1715.80px;top:511.84px" width="12" height="11" viewBox="0 0 12 11"><rect x="1" y="1" width="7.8" height="8.8" fill="#f4f4f4"/><path d="M6.9,0.6 H1.3 Q0.6,0.6 0.6,1.3 V9.7 Q0.6,10.4 1.3,10.4 H8.9 Q9.6,10.4 9.6,9.7 V5.6" fill="none" stroke="#c6c6c6" stroke-width="1.1"/><path d="M3.6,8 L10.6,2.6" stroke="#c2c2c2" stroke-width="2.1"/><path d="M3.2,5.4 V7.6" stroke="#d6d6d6" stroke-width="1"/></svg>
<div class="t" style="left:1196.70px;top:534.19px;font-size:10.2px;font-weight:700;color:#222;letter-spacing:0.4px">P 6:00-14:00/8</div>
<div class="t" style="left:1387.70px;top:534.19px;width:72.90px;text-align:center;font-size:10.2px;font-weight:700;color:#1e8a1e">U</div>
<svg class="ab" style="left:1715.80px;top:533.09px" width="12" height="11" viewBox="0 0 12 11"><rect x="1" y="1" width="7.8" height="8.8" fill="#f4f4f4"/><path d="M6.9,0.6 H1.3 Q0.6,0.6 0.6,1.3 V9.7 Q0.6,10.4 1.3,10.4 H8.9 Q9.6,10.4 9.6,9.7 V5.6" fill="none" stroke="#c6c6c6" stroke-width="1.1"/><path d="M3.6,8 L10.6,2.6" stroke="#c2c2c2" stroke-width="2.1"/><path d="M3.2,5.4 V7.6" stroke="#d6d6d6" stroke-width="1"/></svg>
<div class="t" style="left:1196.70px;top:555.45px;font-size:10.2px;font-weight:400;color:#d6261f">S</div>
<div class="t" style="left:1387.70px;top:555.45px;width:72.90px;text-align:center;font-size:10.2px;font-weight:400;color:#1e8a1e">U</div>
<svg class="ab" style="left:1715.80px;top:554.35px" width="12" height="11" viewBox="0 0 12 11"><rect x="1" y="1" width="7.8" height="8.8" fill="#f4f4f4"/><path d="M6.9,0.6 H1.3 Q0.6,0.6 0.6,1.3 V9.7 Q0.6,10.4 1.3,10.4 H8.9 Q9.6,10.4 9.6,9.7 V5.6" fill="none" stroke="#c6c6c6" stroke-width="1.1"/><path d="M3.6,8 L10.6,2.6" stroke="#c2c2c2" stroke-width="2.1"/><path d="M3.2,5.4 V7.6" stroke="#d6d6d6" stroke-width="1"/></svg>
<div class="t" style="left:1196.70px;top:576.70px;font-size:10.2px;font-weight:400;color:#d6261f">N</div>
<div class="t" style="left:1387.70px;top:576.70px;width:72.90px;text-align:center;font-size:10.2px;font-weight:400;color:#1e8a1e">U</div>
<svg class="ab" style="left:1715.80px;top:575.60px" width="12" height="11" viewBox="0 0 12 11"><rect x="1" y="1" width="7.8" height="8.8" fill="#f4f4f4"/><path d="M6.9,0.6 H1.3 Q0.6,0.6 0.6,1.3 V9.7 Q0.6,10.4 1.3,10.4 H8.9 Q9.6,10.4 9.6,9.7 V5.6" fill="none" stroke="#c6c6c6" stroke-width="1.1"/><path d="M3.6,8 L10.6,2.6" stroke="#c2c2c2" stroke-width="2.1"/><path d="M3.2,5.4 V7.6" stroke="#d6d6d6" stroke-width="1"/></svg>
<div class="t" style="left:1196.70px;top:597.96px;font-size:10.2px;font-weight:700;color:#222;letter-spacing:0.4px">P 6:00-14:00/8</div>
<div class="t" style="left:1387.70px;top:597.96px;width:72.90px;text-align:center;font-size:10.2px;font-weight:700;color:#1e8a1e">U</div>
<svg class="ab" style="left:1715.80px;top:596.86px" width="12" height="11" viewBox="0 0 12 11"><rect x="1" y="1" width="7.8" height="8.8" fill="#f4f4f4"/><path d="M6.9,0.6 H1.3 Q0.6,0.6 0.6,1.3 V9.7 Q0.6,10.4 1.3,10.4 H8.9 Q9.6,10.4 9.6,9.7 V5.6" fill="none" stroke="#c6c6c6" stroke-width="1.1"/><path d="M3.6,8 L10.6,2.6" stroke="#c2c2c2" stroke-width="2.1"/><path d="M3.2,5.4 V7.6" stroke="#d6d6d6" stroke-width="1"/></svg>
<div class="t" style="left:1196.70px;top:619.21px;font-size:10.2px;font-weight:700;color:#222;letter-spacing:0.4px">P 6:00-14:00/8</div>
<div class="t" style="left:1387.70px;top:619.21px;width:72.90px;text-align:center;font-size:10.2px;font-weight:700;color:#1e8a1e">U</div>
<svg class="ab" style="left:1715.80px;top:618.11px" width="12" height="11" viewBox="0 0 12 11"><rect x="1" y="1" width="7.8" height="8.8" fill="#f4f4f4"/><path d="M6.9,0.6 H1.3 Q0.6,0.6 0.6,1.3 V9.7 Q0.6,10.4 1.3,10.4 H8.9 Q9.6,10.4 9.6,9.7 V5.6" fill="none" stroke="#c6c6c6" stroke-width="1.1"/><path d="M3.6,8 L10.6,2.6" stroke="#c2c2c2" stroke-width="2.1"/><path d="M3.2,5.4 V7.6" stroke="#d6d6d6" stroke-width="1"/></svg>
<div class="t" style="left:1196.70px;top:640.47px;font-size:10.2px;font-weight:700;color:#222;letter-spacing:0.4px">P 6:00-14:00/8</div>
<div class="t" style="left:1387.70px;top:640.47px;width:72.90px;text-align:center;font-size:10.2px;font-weight:700;color:#1e8a1e">U</div>
<svg class="ab" style="left:1715.80px;top:639.37px" width="12" height="11" viewBox="0 0 12 11"><rect x="1" y="1" width="7.8" height="8.8" fill="#f4f4f4"/><path d="M6.9,0.6 H1.3 Q0.6,0.6 0.6,1.3 V9.7 Q0.6,10.4 1.3,10.4 H8.9 Q9.6,10.4 9.6,9.7 V5.6" fill="none" stroke="#c6c6c6" stroke-width="1.1"/><path d="M3.6,8 L10.6,2.6" stroke="#c2c2c2" stroke-width="2.1"/><path d="M3.2,5.4 V7.6" stroke="#d6d6d6" stroke-width="1"/></svg>
<div class="t" style="left:1196.70px;top:661.72px;font-size:10.2px;font-weight:700;color:#222;letter-spacing:0.4px">P 6:00-14:00/8</div>
<div class="t" style="left:1387.70px;top:661.72px;width:72.90px;text-align:center;font-size:10.2px;font-weight:700;color:#1e8a1e">U</div>
<svg class="ab" style="left:1715.80px;top:660.62px" width="12" height="11" viewBox="0 0 12 11"><rect x="1" y="1" width="7.8" height="8.8" fill="#f4f4f4"/><path d="M6.9,0.6 H1.3 Q0.6,0.6 0.6,1.3 V9.7 Q0.6,10.4 1.3,10.4 H8.9 Q9.6,10.4 9.6,9.7 V5.6" fill="none" stroke="#c6c6c6" stroke-width="1.1"/><path d="M3.6,8 L10.6,2.6" stroke="#c2c2c2" stroke-width="2.1"/><path d="M3.2,5.4 V7.6" stroke="#d6d6d6" stroke-width="1"/></svg>
<div class="t" style="left:1196.70px;top:682.98px;font-size:10.2px;font-weight:700;color:#222;letter-spacing:0.4px">P 6:00-14:00/8</div>
<div class="t" style="left:1387.70px;top:682.98px;width:72.90px;text-align:center;font-size:10.2px;font-weight:700;color:#1e8a1e">U</div>
<svg class="ab" style="left:1715.80px;top:681.88px" width="12" height="11" viewBox="0 0 12 11"><rect x="1" y="1" width="7.8" height="8.8" fill="#f4f4f4"/><path d="M6.9,0.6 H1.3 Q0.6,0.6 0.6,1.3 V9.7 Q0.6,10.4 1.3,10.4 H8.9 Q9.6,10.4 9.6,9.7 V5.6" fill="none" stroke="#c6c6c6" stroke-width="1.1"/><path d="M3.6,8 L10.6,2.6" stroke="#c2c2c2" stroke-width="2.1"/><path d="M3.2,5.4 V7.6" stroke="#d6d6d6" stroke-width="1"/></svg>
<div class="t" style="left:1196.70px;top:704.23px;font-size:10.2px;font-weight:400;color:#d6261f">S</div>
<div class="t" style="left:1387.70px;top:704.23px;width:72.90px;text-align:center;font-size:10.2px;font-weight:400;color:#1e8a1e">U</div>
<svg class="ab" style="left:1715.80px;top:703.13px" width="12" height="11" viewBox="0 0 12 11"><rect x="1" y="1" width="7.8" height="8.8" fill="#f4f4f4"/><path d="M6.9,0.6 H1.3 Q0.6,0.6 0.6,1.3 V9.7 Q0.6,10.4 1.3,10.4 H8.9 Q9.6,10.4 9.6,9.7 V5.6" fill="none" stroke="#c6c6c6" stroke-width="1.1"/><path d="M3.6,8 L10.6,2.6" stroke="#c2c2c2" stroke-width="2.1"/><path d="M3.2,5.4 V7.6" stroke="#d6d6d6" stroke-width="1"/></svg>
<div class="t" style="left:1196.70px;top:725.49px;font-size:10.2px;font-weight:400;color:#d6261f">N</div>
<div class="t" style="left:1387.70px;top:725.49px;width:72.90px;text-align:center;font-size:10.2px;font-weight:400;color:#1e8a1e">U</div>
<svg class="ab" style="left:1715.80px;top:724.39px" width="12" height="11" viewBox="0 0 12 11"><rect x="1" y="1" width="7.8" height="8.8" fill="#f4f4f4"/><path d="M6.9,0.6 H1.3 Q0.6,0.6 0.6,1.3 V9.7 Q0.6,10.4 1.3,10.4 H8.9 Q9.6,10.4 9.6,9.7 V5.6" fill="none" stroke="#c6c6c6" stroke-width="1.1"/><path d="M3.6,8 L10.6,2.6" stroke="#c2c2c2" stroke-width="2.1"/><path d="M3.2,5.4 V7.6" stroke="#d6d6d6" stroke-width="1"/></svg>
<div class="t" style="left:1196.70px;top:746.74px;font-size:10.2px;font-weight:400;color:#222">P 6:00-14:00/8</div>
<div class="t" style="left:1318.80px;top:746.74px;font-size:10.2px;font-weight:400;color:#222">6:00-14:00</div>
<div class="t" style="left:1460.60px;top:746.74px;width:46.60px;text-align:center;font-size:10.2px;font-weight:400;color:#222">8:00</div>
<svg class="ab" style="left:1715.80px;top:745.64px" width="12" height="11" viewBox="0 0 12 11"><rect x="1" y="1" width="7.8" height="8.8" fill="#f4f4f4"/><path d="M6.9,0.6 H1.3 Q0.6,0.6 0.6,1.3 V9.7 Q0.6,10.4 1.3,10.4 H8.9 Q9.6,10.4 9.6,9.7 V5.6" fill="none" stroke="#c6c6c6" stroke-width="1.1"/><path d="M3.6,8 L10.6,2.6" stroke="#c2c2c2" stroke-width="2.1"/><path d="M3.2,5.4 V7.6" stroke="#d6d6d6" stroke-width="1"/></svg>
<div class="t" style="left:1196.70px;top:767.74px;font-size:10.2px;font-weight:400;color:#222">P 6:00-14:00/8</div>
<div class="t" style="left:1318.80px;top:767.74px;font-size:10.2px;font-weight:400;color:#222">6:00-14:00</div>
<div class="t" style="left:1460.60px;top:767.74px;width:46.60px;text-align:center;font-size:10.2px;font-weight:400;color:#222">8:00</div>
<svg class="ab" style="left:1715.80px;top:766.64px" width="12" height="11" viewBox="0 0 12 11"><rect x="1" y="1" width="7.8" height="8.8" fill="#f4f4f4"/><path d="M6.9,0.6 H1.3 Q0.6,0.6 0.6,1.3 V9.7 Q0.6,10.4 1.3,10.4 H8.9 Q9.6,10.4 9.6,9.7 V5.6" fill="none" stroke="#c6c6c6" stroke-width="1.1"/><path d="M3.6,8 L10.6,2.6" stroke="#c2c2c2" stroke-width="2.1"/><path d="M3.2,5.4 V7.6" stroke="#d6d6d6" stroke-width="1"/></svg>
<div class="t" style="left:1196.70px;top:788.74px;font-size:10.2px;font-weight:400;color:#222">P 6:00-14:00/8</div>
<div class="t" style="left:1318.80px;top:788.74px;font-size:10.2px;font-weight:400;color:#222">6:00-14:00</div>
<div class="t" style="left:1460.60px;top:788.74px;width:46.60px;text-align:center;font-size:10.2px;font-weight:400;color:#222">8:00</div>
<svg class="ab" style="left:1715.80px;top:787.64px" width="12" height="11" viewBox="0 0 12 11"><rect x="1" y="1" width="7.8" height="8.8" fill="#f4f4f4"/><path d="M6.9,0.6 H1.3 Q0.6,0.6 0.6,1.3 V9.7 Q0.6,10.4 1.3,10.4 H8.9 Q9.6,10.4 9.6,9.7 V5.6" fill="none" stroke="#c6c6c6" stroke-width="1.1"/><path d="M3.6,8 L10.6,2.6" stroke="#c2c2c2" stroke-width="2.1"/><path d="M3.2,5.4 V7.6" stroke="#d6d6d6" stroke-width="1"/></svg>
<div class="t" style="left:1196.70px;top:809.74px;font-size:10.2px;font-weight:400;color:#222">P 6:00-14:00/8</div>
<div class="t" style="left:1318.80px;top:809.74px;font-size:10.2px;font-weight:400;color:#222">6:00-14:00</div>
<div class="t" style="left:1460.60px;top:809.74px;width:46.60px;text-align:center;font-size:10.2px;font-weight:400;color:#222">8:00</div>
<svg class="ab" style="left:1715.80px;top:808.64px" width="12" height="11" viewBox="0 0 12 11"><rect x="1" y="1" width="7.8" height="8.8" fill="#f4f4f4"/><path d="M6.9,0.6 H1.3 Q0.6,0.6 0.6,1.3 V9.7 Q0.6,10.4 1.3,10.4 H8.9 Q9.6,10.4 9.6,9.7 V5.6" fill="none" stroke="#c6c6c6" stroke-width="1.1"/><path d="M3.6,8 L10.6,2.6" stroke="#c2c2c2" stroke-width="2.1"/><path d="M3.2,5.4 V7.6" stroke="#d6d6d6" stroke-width="1"/></svg>
<div class="t" style="left:1196.70px;top:830.74px;font-size:10.2px;font-weight:400;color:#222">P 6:00-14:00/8</div>
<div class="t" style="left:1318.80px;top:830.74px;font-size:10.2px;font-weight:400;color:#222">6:00-14:00</div>
<div class="t" style="left:1460.60px;top:830.74px;width:46.60px;text-align:center;font-size:10.2px;font-weight:400;color:#222">8:00</div>
<svg class="ab" style="left:1715.80px;top:829.64px" width="12" height="11" viewBox="0 0 12 11"><rect x="1" y="1" width="7.8" height="8.8" fill="#f4f4f4"/><path d="M6.9,0.6 H1.3 Q0.6,0.6 0.6,1.3 V9.7 Q0.6,10.4 1.3,10.4 H8.9 Q9.6,10.4 9.6,9.7 V5.6" fill="none" stroke="#c6c6c6" stroke-width="1.1"/><path d="M3.6,8 L10.6,2.6" stroke="#c2c2c2" stroke-width="2.1"/><path d="M3.2,5.4 V7.6" stroke="#d6d6d6" stroke-width="1"/></svg>
<div class="ab" style="left:1188px;top:845.34px;width:557px;height:2px;background:#e0e0e0"></div>
<div class="t" style="left:1196.7px;top:851.50px;font-size:9.45px;color:#333">Norma miesięczna</div>
<div class="t" style="left:1557.5px;top:851.50px;width:60px;text-align:center;font-size:9.45px;color:#333">92:00</div>
<div class="t" style="left:1196.7px;top:870.60px;font-size:9.45px;color:#333">Dni pracy</div>
<div class="t" style="left:1557.5px;top:870.60px;width:60px;text-align:center;font-size:9.45px;color:#333">23</div>
<div class="t" style="left:1196.7px;top:889.70px;font-size:9.45px;color:#333">Liczba sobót</div>
<div class="t" style="left:1557.5px;top:889.70px;width:60px;text-align:center;font-size:9.45px;color:#333">4</div>
<div class="t" style="left:1196.7px;top:908.80px;font-size:9.45px;color:#333">Niedziele i święta</div>
<div class="t" style="left:1557.5px;top:908.80px;width:60px;text-align:center;font-size:9.45px;color:#333">4</div>
<div class="t" style="left:1179.5px;top:746.0px;font-size:6px;color:#336">D</div>
<div class="t" style="left:1179.5px;top:767.0px;font-size:6px;color:#336">D</div>
<div class="t" style="left:1179.5px;top:788.0px;font-size:6px;color:#336">D</div>
<svg class="ab" style="left:1897px;top:128.5px" width="9" height="8" viewBox="0 0 9 8"><path d="M4.5,0.5 L8.8,7.5 H0.2 Z" fill="#8a8a8a" stroke="#8a8a8a" stroke-width="0.6" stroke-linejoin="round"/></svg>
<div class="ab" style="left:1897px;top:142px;width:9px;height:357px;border-radius:4.5px;background:#8a8a8a"></div>
<svg class="ab" style="left:1897px;top:920.5px" width="9" height="8" viewBox="0 0 9 8"><path d="M0.2,0.5 H8.8 L4.5,7.5 Z" fill="#8a8a8a"/></svg>

</body></html>
